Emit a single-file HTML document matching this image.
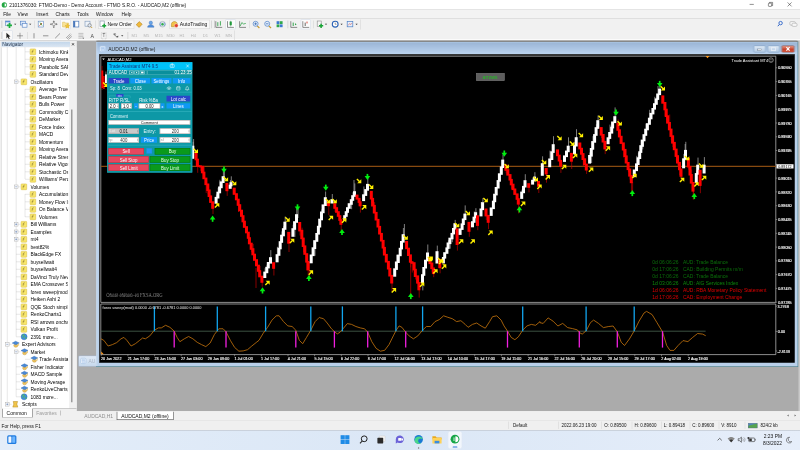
<!DOCTYPE html>
<html><head><meta charset="utf-8"><title>MT4</title>
<style>
html,body{margin:0;padding:0;}
body{width:800px;height:450px;overflow:hidden;position:relative;background:#ababab;font-family:"Liberation Sans", sans-serif;-webkit-text-size-adjust:none;}
#z{position:absolute;left:0;top:0;width:800px;height:450px;zoom:4;transform:scale(0.25);transform-origin:0 0;filter:contrast(1.001);}
div{box-sizing:border-box;}
svg{position:absolute;left:0;top:0;}
svg text{font-family:"Liberation Sans", sans-serif;}
</style></head><body><div id="z">
<div style="position:absolute;left:0.0px;top:0.0px;width:800.0px;height:9.6px;background:#ffffff;"></div>
<div style="position:absolute;left:0.0px;top:9.6px;width:800.0px;height:9.0px;background:#f3f3f3;"></div>
<svg width="800" height="20" viewBox="0 0 800 20"><circle cx="4.3" cy="4.9" r="2.6" fill="#21a641"/><path d="M4.6 3.2 a1.7 1.7 0 0 1 0 3.4 z" fill="#fff"/></svg>
<div style="position:absolute;left:9.3px;top:2.0px;font-size:5.1px;line-height:6.1px;color:#111;white-space:nowrap;transform:scaleX(0.947);transform-origin:0 50%;">2101376030: FTMO-Demo - Demo Account - FTMO S.R.O. - AUDCAD,M2 (offline)</div>
<svg width="800" height="12" viewBox="0 0 800 12" fill="none" stroke="#222" stroke-width="0.5"><path d="M749.6 4.4h4.2"/><rect x="768.4" y="3.2" width="3.2" height="3.2" rx="0.6"/><path d="M769.4 3.2v-0.8h3.2v3.2h-0.9"/><path d="M787.6 2.4l4 4M791.6 2.4l-4 4"/></svg>
<div style="position:absolute;left:3.2px;top:10.9px;font-size:5.1px;line-height:6.1px;color:#111;white-space:nowrap;transform:scaleX(0.95);transform-origin:0 50%;">File</div>
<div style="position:absolute;left:17.6px;top:10.9px;font-size:5.1px;line-height:6.1px;color:#111;white-space:nowrap;transform:scaleX(0.95);transform-origin:0 50%;">View</div>
<div style="position:absolute;left:36.2px;top:10.9px;font-size:5.1px;line-height:6.1px;color:#111;white-space:nowrap;transform:scaleX(0.95);transform-origin:0 50%;">Insert</div>
<div style="position:absolute;left:55.6px;top:10.9px;font-size:5.1px;line-height:6.1px;color:#111;white-space:nowrap;transform:scaleX(0.95);transform-origin:0 50%;">Charts</div>
<div style="position:absolute;left:77.2px;top:10.9px;font-size:5.1px;line-height:6.1px;color:#111;white-space:nowrap;transform:scaleX(0.95);transform-origin:0 50%;">Tools</div>
<div style="position:absolute;left:96.0px;top:10.9px;font-size:5.1px;line-height:6.1px;color:#111;white-space:nowrap;transform:scaleX(0.95);transform-origin:0 50%;">Window</div>
<div style="position:absolute;left:121.6px;top:10.9px;font-size:5.1px;line-height:6.1px;color:#111;white-space:nowrap;transform:scaleX(0.95);transform-origin:0 50%;">Help</div>
<div style="position:absolute;left:0.0px;top:18.5px;width:800.0px;height:22.0px;background:#f1f1f1;border-top:0.5px solid #dcdcdc;"></div>
<div style="position:absolute;left:0.0px;top:38.9px;width:800.0px;height:1.3px;background:#fbfbfb;"></div>
<div style="position:absolute;left:0.0px;top:40.2px;width:77.0px;height:0.8px;background:#d9d9d9;"></div>
<div style="position:absolute;left:360.0px;top:19.5px;width:0.6px;height:10.0px;background:#d0d0d0;"></div>
<div style="position:absolute;left:234.5px;top:30.5px;width:0.6px;height:9.5px;background:#d0d0d0;"></div>
<div style="position:absolute;left:1.6px;top:20.5px;width:0.7px;height:7.5px;background:#c4c4c4;"></div>
<div style="position:absolute;left:1.6px;top:32.0px;width:0.7px;height:7.0px;background:#c4c4c4;"></div>
<div style="position:absolute;left:214.2px;top:20.5px;width:0.7px;height:7.5px;background:#c4c4c4;"></div>
<div style="position:absolute;left:2.6px;top:30.6px;width:9.8px;height:9.2px;background:#f9f9f9;border:0.5px solid #d3dbe8;"></div>
<div style="position:absolute;left:60.5px;top:19.6px;width:10.0px;height:9.6px;background:#fbfbfb;border:0.5px solid #cfd8e6;"></div>
<div style="position:absolute;left:225.5px;top:19.6px;width:10.0px;height:9.6px;background:#fbfbfb;border:0.5px solid #cfd8e6;"></div>
<div style="position:absolute;left:300.8px;top:19.6px;width:10.0px;height:9.6px;background:#fbfbfb;border:0.5px solid #cfd8e6;"></div>
<div style="position:absolute;left:98.3px;top:19.8px;width:36.0px;height:9.2px;background:#f8f8f8;border:0.5px solid #d5d5d5;"></div>
<div style="position:absolute;left:169.6px;top:19.8px;width:40.4px;height:9.2px;background:#f8f8f8;border:0.5px solid #d5d5d5;"></div>
<div style="position:absolute;left:34.5px;top:20.5px;width:0.6px;height:7.8px;background:#cfcfcf;"></div>
<div style="position:absolute;left:95.2px;top:20.5px;width:0.6px;height:7.8px;background:#cfcfcf;"></div>
<div style="position:absolute;left:211.3px;top:20.5px;width:0.6px;height:7.8px;background:#cfcfcf;"></div>
<div style="position:absolute;left:249.2px;top:20.5px;width:0.6px;height:7.8px;background:#cfcfcf;"></div>
<div style="position:absolute;left:287.6px;top:20.5px;width:0.6px;height:7.8px;background:#cfcfcf;"></div>
<div style="position:absolute;left:313.2px;top:20.5px;width:0.6px;height:7.8px;background:#cfcfcf;"></div>
<div style="position:absolute;left:27.5px;top:32.0px;width:0.6px;height:7.0px;background:#cfcfcf;"></div>
<div style="position:absolute;left:127.6px;top:32.0px;width:0.6px;height:7.0px;background:#cfcfcf;"></div>
<svg width="800" height="42" viewBox="0 0 800 42"><rect x="5.4" y="21.0" width="4.6" height="4.6" fill="#eaf1fb" stroke="#5b82b8" stroke-width="0.6"/><rect x="5.4" y="21.0" width="4.6" height="1.3" fill="#5b8fd6"/><path d="M7 25.4h5M9.5 22.9v5" stroke="#1fae3f" stroke-width="1.7"/><path d="M14.1 23.7h2.2l-1.1 1.3z" fill="#333"/><rect x="20.6" y="21.2" width="4.8" height="3.8" fill="#dbe8fa" stroke="#4f7fc3" stroke-width="0.6"/><rect x="22.2" y="23.4" width="4.8" height="3.8" fill="#f4f8ff" stroke="#4f7fc3" stroke-width="0.6"/><path d="M29.1 23.7h2.2l-1.1 1.3z" fill="#333"/><rect x="38.2" y="21.2" width="5.4" height="5.8" fill="#fff" stroke="#5f87bd" stroke-width="0.6"/><path d="M39.6 25.599999999999998l2.4-2.6" stroke="#d23a2a" stroke-width="0.9"/><path d="M40 22.599999999999998l2 2.8" stroke="#27a33a" stroke-width="0.9"/><path d="M53.8 21.0v6.4M50.6 24.2h6.4" stroke="#666" stroke-width="0.6"/><path d="M53.8 20.4l1.1 1.3h-2.2zM53.8 28.0l1.1-1.3h-2.2zM50 24.2l1.3-1.1v2.2zM57.6 24.2l-1.3-1.1v2.2z" fill="#666"/><circle cx="53.8" cy="24.2" r="1.5" fill="#f1f1f1" stroke="#666" stroke-width="0.5"/><path d="M62.6 22.2h2.2l0.6 0.8h3.2v4h-6z" fill="#f9e49a" stroke="#d9b64a" stroke-width="0.5"/><path d="M67.4 23.599999999999998l0.8 1.6 1.7 0.2-1.3 1.2 0.4 1.7-1.6-0.9-1.6 0.9 0.4-1.7-1.3-1.2 1.7-0.2z" fill="#f2c636" stroke="#c9981e" stroke-width="0.3"/><rect x="73.4" y="21.2" width="5.4" height="5.8" fill="#fff" stroke="#4a78ba" stroke-width="0.7"/><rect x="73.4" y="21.2" width="1.8" height="5.8" fill="#4a78ba"/><rect x="85" y="21.2" width="5" height="5" fill="#eef3fa" stroke="#7d97b8" stroke-width="0.6"/><circle cx="89.6" cy="25.4" r="1.7" fill="#dfe9f7" stroke="#6c6c6c" stroke-width="0.6"/><path d="M90.8 26.599999999999998l1.4 1.4" stroke="#c49a2a" stroke-width="0.9"/><rect x="100" y="21.0" width="4.2" height="5.6" fill="#fff" stroke="#7b8aa0" stroke-width="0.6"/><path d="M102.2 25.8h4M104.2 23.8v4" stroke="#17a535" stroke-width="1.4"/><path d="M136.2 24.8l3-3.2 3 2.6-3 3.2z" fill="#f0b93a" stroke="#a9781a" stroke-width="0.5"/><circle cx="150.8" cy="22.8" r="1.7" fill="#6aa5e8" stroke="#3c72b8" stroke-width="0.4"/><path d="M147.6 27.2c0-3.4 6.4-3.4 6.4 0z" fill="#4d8fe0" stroke="#3468ad" stroke-width="0.4"/><circle cx="162.5" cy="24.2" r="2.9" fill="#d7dde6" stroke="#9aa4b3" stroke-width="0.5"/><circle cx="162.5" cy="24.2" r="1.2" fill="#2fae4d"/><path d="M160.7 22.4a2.6 2.6 0 0 0 0 3.6M164.3 22.4a2.6 2.6 0 0 1 0 3.6" stroke="#3f7fd0" stroke-width="0.5" fill="none"/><path d="M171.4 24.4c0-3.8 6-3.8 6 0v2.4h-6z" fill="#f2c24a" stroke="#a47c1d" stroke-width="0.5"/><circle cx="176.3" cy="25.599999999999998" r="1.9" fill="#e03c2c" stroke="#fff" stroke-width="0.4"/><path d="M215.8 21.2v6.2h6.4" stroke="#444" stroke-width="0.6" fill="none"/><path d="M217.8 22.2v4M220.4 21.2v4.4" stroke="#1c9a38" stroke-width="0.8"/><path d="M227.5 21.2v6.2h6.4" stroke="#444" stroke-width="0.6" fill="none"/><rect x="229.6" y="21.599999999999998" width="2.2" height="3.6" fill="#25a843"/><path d="M230.7 20.8v5.6" stroke="#1c7a30" stroke-width="0.5"/><path d="M239.6 21.2v6.2h6.4" stroke="#444" stroke-width="0.6" fill="none"/><path d="M240.2 26.0l1.6-3.4 1.8 1.4 2.2-0.6" stroke="#1c9a38" stroke-width="0.7" fill="none"/><path d="M257.2 25.8l2.2 2.2" stroke="#c9992a" stroke-width="1.2"/><circle cx="255.6" cy="23.8" r="2.5" fill="#e4effc" stroke="#4d7ec4" stroke-width="0.7"/><path d="M254.29999999999998 23.8h2.6M255.6 22.5v2.6" stroke="#2f62ad" stroke-width="0.7"/><path d="M268.8 25.8l2.2 2.2" stroke="#c9992a" stroke-width="1.2"/><circle cx="267.2" cy="23.8" r="2.5" fill="#e4effc" stroke="#4d7ec4" stroke-width="0.7"/><path d="M265.9 23.8h2.6" stroke="#2f62ad" stroke-width="0.7"/><rect x="276.6" y="21.2" width="2.8" height="2.8" fill="#3c78d0"/><rect x="279.8" y="21.2" width="2.8" height="2.8" fill="#2fa84a"/><rect x="276.6" y="24.4" width="2.8" height="2.8" fill="#2fa84a"/><rect x="279.8" y="24.4" width="2.8" height="2.8" fill="#3c78d0"/><path d="M290.8 21.2v6.2h6.4" stroke="#444" stroke-width="0.6" fill="none"/><path d="M293.2 22.599999999999998v3.4" stroke="#1c9a38" stroke-width="0.9"/><path d="M295 23.2l1.6 1-1.6 1z" fill="#1c9a38"/><path d="M302.8 21.2v6.2h6.4" stroke="#444" stroke-width="0.6" fill="none"/><path d="M305.2 22.599999999999998v3.4" stroke="#444" stroke-width="0.8"/><path d="M307 21.599999999999998v1.8" stroke="#d0362a" stroke-width="0.9"/><rect x="317.2" y="21.0" width="4" height="5.4" fill="#f4f4f4" stroke="#8a8a8a" stroke-width="0.6"/><path d="M319 25.8h4.2M321.1 23.7v4.2" stroke="#17a535" stroke-width="1.5"/><path d="M324.9 23.7h2.2l-1.1 1.3z" fill="#333"/><circle cx="335.2" cy="24.2" r="2.9" fill="#fff" stroke="#2b62b5" stroke-width="1.1"/><path d="M335.2 22.599999999999998v1.7h1.3" stroke="#444" stroke-width="0.5" fill="none"/><path d="M340.5 23.7h2.2l-1.1 1.3z" fill="#333"/><rect x="347.2" y="21.4" width="5.6" height="5.4" fill="#e7f0fc" stroke="#4d7ec4" stroke-width="0.7"/><path d="M348.2 25.4l1.4-1.8 1.2 0.9 1.2-1.4" stroke="#d0362a" stroke-width="0.5" fill="none"/><path d="M355.5 23.7h2.2l-1.1 1.3z" fill="#333"/><circle cx="780.6" cy="23.099999999999998" r="1.7" fill="none" stroke="#2d63c8" stroke-width="0.9"/><path d="M779.4 24.4l-1.6 1.8" stroke="#2d63c8" stroke-width="1"/><rect x="789.8" y="21.599999999999998" width="5.6" height="3.6" rx="1.2" fill="#f7f7f7" stroke="#a9a9a9" stroke-width="0.6"/><rect x="792" y="23.2" width="5" height="3.2" rx="1.1" fill="#f7f7f7" stroke="#a9a9a9" stroke-width="0.6"/><path d="M6.4 32.8v5.6l1.4-1.3 1 2.1 0.9-0.4-1-2 1.8-0.2z" fill="#222"/><path d="M20 32.8v6M17 35.8h6" stroke="#555" stroke-width="0.5"/><path d="M34 33.199999999999996v5.2" stroke="#555" stroke-width="0.6"/><path d="M43 35.8h5.4" stroke="#555" stroke-width="0.6"/><path d="M55.2 38.199999999999996l4.8-4.8" stroke="#555" stroke-width="0.6"/><path d="M66 38.0l4.4-4.2M67 39.0l4.4-4.2M68.4 39.599999999999994l3.4-3.2" stroke="#666" stroke-width="0.5"/><path d="M78.4 33.4h5M78.4 35.0h5M78.4 36.599999999999994h5M78.4 38.199999999999996h3.4" stroke="#8a8a8a" stroke-width="0.45"/><path d="M82.2 37.8h2l-1 1.2z" fill="#555"/><rect x="101.4" y="32.8" width="4.8" height="6" fill="none" stroke="#9a9a9a" stroke-width="0.4" stroke-dasharray="0.8 0.6"/><path d="M113.6 34.199999999999996l2 0-0.9-1M113.6 34.199999999999996l3.6 3" stroke="#333" stroke-width="0.6" fill="none"/><path d="M116.4 37.199999999999996h1.8v-1.8z" fill="#333"/><path d="M121.1 35.3h2.2l-1.1 1.3z" fill="#333"/></svg>
<div style="position:absolute;left:107.4px;top:20.9px;font-size:5.1px;line-height:6.1px;color:#111;white-space:nowrap;">New Order</div>
<div style="position:absolute;left:179.8px;top:20.9px;font-size:5.1px;line-height:6.1px;color:#111;white-space:nowrap;">AutoTrading</div>
<div style="position:absolute;left:90.6px;top:32.7px;font-size:5.2px;line-height:6.2px;color:#444;white-space:nowrap;">A</div>
<div style="position:absolute;left:102.6px;top:33.0px;font-size:4.6px;line-height:5.6px;color:#555;white-space:nowrap;">T</div>
<div style="position:absolute;left:131.6px;top:33.2px;font-size:4.1px;line-height:5.1px;color:#b6b6b6;white-space:nowrap;">M1</div>
<div style="position:absolute;left:143.6px;top:33.2px;font-size:4.1px;line-height:5.1px;color:#b6b6b6;white-space:nowrap;">M5</div>
<div style="position:absolute;left:154.8px;top:33.2px;font-size:4.1px;line-height:5.1px;color:#b6b6b6;white-space:nowrap;">M15</div>
<div style="position:absolute;left:166.6px;top:33.2px;font-size:4.1px;line-height:5.1px;color:#b6b6b6;white-space:nowrap;">M30</div>
<div style="position:absolute;left:179.4px;top:33.2px;font-size:4.1px;line-height:5.1px;color:#b6b6b6;white-space:nowrap;">H1</div>
<div style="position:absolute;left:190.8px;top:33.2px;font-size:4.1px;line-height:5.1px;color:#b6b6b6;white-space:nowrap;">H4</div>
<div style="position:absolute;left:202.8px;top:33.2px;font-size:4.1px;line-height:5.1px;color:#b6b6b6;white-space:nowrap;">D1</div>
<div style="position:absolute;left:214.4px;top:33.2px;font-size:4.1px;line-height:5.1px;color:#b6b6b6;white-space:nowrap;">W1</div>
<div style="position:absolute;left:225.6px;top:33.2px;font-size:4.1px;line-height:5.1px;color:#b6b6b6;white-space:nowrap;">MN</div>
<div style="position:absolute;left:0.0px;top:41.0px;width:77.0px;height:379.0px;background:#f0f0f0;"></div>
<div style="position:absolute;left:76.4px;top:41.0px;width:0.6px;height:370.0px;background:#d8d8d8;"></div>
<div style="position:absolute;left:1.3px;top:41.8px;width:68.8px;height:5.2px;background:linear-gradient(#c2d6ea,#dbe6f2);"></div>
<div style="position:absolute;left:2.2px;top:41.3px;font-size:4.9px;line-height:5.9px;color:#1b2f4a;white-space:nowrap;">Navigator</div>
<svg width="80" height="50" viewBox="0 0 80 50"><path d="M72 43.2l2 2.2M74 43.2l-2 2.2" stroke="#222" stroke-width="0.7"/></svg>
<div style="position:absolute;left:1.6px;top:47.4px;width:67.6px;height:361.0px;background:#ffffff;border-left:0.5px solid #d0d0d0;"></div>
<div style="position:absolute;left:69.2px;top:47.4px;width:7.2px;height:361.0px;background:#f1f1f1;"></div>
<div style="position:absolute;left:70.9px;top:109.6px;width:1.5px;height:292.6px;background:#9c9c9c;"></div>
<div style="position:absolute;left:39.0px;top:48.8px;font-size:5.0px;line-height:6.0px;color:#000;white-space:nowrap;max-width:30.0px;overflow:hidden;transform:scaleX(0.97);transform-origin:0 50%;">Ichimoku Kinko Hyo</div>
<div style="position:absolute;left:39.0px;top:56.3px;font-size:5.0px;line-height:6.0px;color:#000;white-space:nowrap;max-width:30.0px;overflow:hidden;transform:scaleX(0.97);transform-origin:0 50%;">Moving Average</div>
<div style="position:absolute;left:39.0px;top:63.8px;font-size:5.0px;line-height:6.0px;color:#000;white-space:nowrap;max-width:30.0px;overflow:hidden;transform:scaleX(0.97);transform-origin:0 50%;">Parabolic SAR</div>
<div style="position:absolute;left:39.0px;top:71.3px;font-size:5.0px;line-height:6.0px;color:#000;white-space:nowrap;max-width:30.0px;overflow:hidden;transform:scaleX(0.97);transform-origin:0 50%;">Standard Deviation</div>
<div style="position:absolute;left:30.6px;top:78.8px;font-size:5.0px;line-height:6.0px;color:#000;white-space:nowrap;max-width:38.4px;overflow:hidden;transform:scaleX(0.97);transform-origin:0 50%;">Oscillators</div>
<div style="position:absolute;left:39.0px;top:86.3px;font-size:5.0px;line-height:6.0px;color:#000;white-space:nowrap;max-width:30.0px;overflow:hidden;transform:scaleX(0.97);transform-origin:0 50%;">Average True Range</div>
<div style="position:absolute;left:39.0px;top:93.8px;font-size:5.0px;line-height:6.0px;color:#000;white-space:nowrap;max-width:30.0px;overflow:hidden;transform:scaleX(0.97);transform-origin:0 50%;">Bears Power</div>
<div style="position:absolute;left:39.0px;top:101.3px;font-size:5.0px;line-height:6.0px;color:#000;white-space:nowrap;max-width:30.0px;overflow:hidden;transform:scaleX(0.97);transform-origin:0 50%;">Bulls Power</div>
<div style="position:absolute;left:39.0px;top:108.8px;font-size:5.0px;line-height:6.0px;color:#000;white-space:nowrap;max-width:30.0px;overflow:hidden;transform:scaleX(0.97);transform-origin:0 50%;">Commodity Channel Index</div>
<div style="position:absolute;left:39.0px;top:116.3px;font-size:5.0px;line-height:6.0px;color:#000;white-space:nowrap;max-width:30.0px;overflow:hidden;transform:scaleX(0.97);transform-origin:0 50%;">DeMarker</div>
<div style="position:absolute;left:39.0px;top:123.8px;font-size:5.0px;line-height:6.0px;color:#000;white-space:nowrap;max-width:30.0px;overflow:hidden;transform:scaleX(0.97);transform-origin:0 50%;">Force Index</div>
<div style="position:absolute;left:39.0px;top:131.3px;font-size:5.0px;line-height:6.0px;color:#000;white-space:nowrap;max-width:30.0px;overflow:hidden;transform:scaleX(0.97);transform-origin:0 50%;">MACD</div>
<div style="position:absolute;left:39.0px;top:138.8px;font-size:5.0px;line-height:6.0px;color:#000;white-space:nowrap;max-width:30.0px;overflow:hidden;transform:scaleX(0.97);transform-origin:0 50%;">Momentum</div>
<div style="position:absolute;left:39.0px;top:146.3px;font-size:5.0px;line-height:6.0px;color:#000;white-space:nowrap;max-width:30.0px;overflow:hidden;transform:scaleX(0.97);transform-origin:0 50%;">Moving Average of Oscillator</div>
<div style="position:absolute;left:39.0px;top:153.8px;font-size:5.0px;line-height:6.0px;color:#000;white-space:nowrap;max-width:30.0px;overflow:hidden;transform:scaleX(0.97);transform-origin:0 50%;">Relative Strength Index</div>
<div style="position:absolute;left:39.0px;top:161.3px;font-size:5.0px;line-height:6.0px;color:#000;white-space:nowrap;max-width:30.0px;overflow:hidden;transform:scaleX(0.97);transform-origin:0 50%;">Relative Vigor Index</div>
<div style="position:absolute;left:39.0px;top:168.8px;font-size:5.0px;line-height:6.0px;color:#000;white-space:nowrap;max-width:30.0px;overflow:hidden;transform:scaleX(0.97);transform-origin:0 50%;">Stochastic Oscillator</div>
<div style="position:absolute;left:39.0px;top:176.3px;font-size:5.0px;line-height:6.0px;color:#000;white-space:nowrap;max-width:30.0px;overflow:hidden;transform:scaleX(0.97);transform-origin:0 50%;">Williams' Percent Range</div>
<div style="position:absolute;left:30.6px;top:183.8px;font-size:5.0px;line-height:6.0px;color:#000;white-space:nowrap;max-width:38.4px;overflow:hidden;transform:scaleX(0.97);transform-origin:0 50%;">Volumes</div>
<div style="position:absolute;left:39.0px;top:191.3px;font-size:5.0px;line-height:6.0px;color:#000;white-space:nowrap;max-width:30.0px;overflow:hidden;transform:scaleX(0.97);transform-origin:0 50%;">Accumulation/Distribution</div>
<div style="position:absolute;left:39.0px;top:198.8px;font-size:5.0px;line-height:6.0px;color:#000;white-space:nowrap;max-width:30.0px;overflow:hidden;transform:scaleX(0.97);transform-origin:0 50%;">Money Flow Index</div>
<div style="position:absolute;left:39.0px;top:206.3px;font-size:5.0px;line-height:6.0px;color:#000;white-space:nowrap;max-width:30.0px;overflow:hidden;transform:scaleX(0.97);transform-origin:0 50%;">On Balance Volume</div>
<div style="position:absolute;left:39.0px;top:213.8px;font-size:5.0px;line-height:6.0px;color:#000;white-space:nowrap;max-width:30.0px;overflow:hidden;transform:scaleX(0.97);transform-origin:0 50%;">Volumes</div>
<div style="position:absolute;left:30.6px;top:221.3px;font-size:5.0px;line-height:6.0px;color:#000;white-space:nowrap;max-width:38.4px;overflow:hidden;transform:scaleX(0.97);transform-origin:0 50%;">Bill Williams</div>
<div style="position:absolute;left:30.6px;top:228.8px;font-size:5.0px;line-height:6.0px;color:#000;white-space:nowrap;max-width:38.4px;overflow:hidden;transform:scaleX(0.97);transform-origin:0 50%;">Examples</div>
<div style="position:absolute;left:30.6px;top:236.3px;font-size:5.0px;line-height:6.0px;color:#000;white-space:nowrap;max-width:38.4px;overflow:hidden;transform:scaleX(0.97);transform-origin:0 50%;">mt4</div>
<div style="position:absolute;left:30.6px;top:243.8px;font-size:5.0px;line-height:6.0px;color:#000;white-space:nowrap;max-width:38.4px;overflow:hidden;transform:scaleX(0.97);transform-origin:0 50%;">best82%</div>
<div style="position:absolute;left:30.6px;top:251.3px;font-size:5.0px;line-height:6.0px;color:#000;white-space:nowrap;max-width:38.4px;overflow:hidden;transform:scaleX(0.97);transform-origin:0 50%;">BlackEdge FX</div>
<div style="position:absolute;left:30.6px;top:258.8px;font-size:5.0px;line-height:6.0px;color:#000;white-space:nowrap;max-width:38.4px;overflow:hidden;transform:scaleX(0.97);transform-origin:0 50%;">buysellwait</div>
<div style="position:absolute;left:30.6px;top:266.3px;font-size:5.0px;line-height:6.0px;color:#000;white-space:nowrap;max-width:38.4px;overflow:hidden;transform:scaleX(0.97);transform-origin:0 50%;">buysellwait4</div>
<div style="position:absolute;left:30.6px;top:273.8px;font-size:5.0px;line-height:6.0px;color:#000;white-space:nowrap;max-width:38.4px;overflow:hidden;transform:scaleX(0.97);transform-origin:0 50%;">DaVinci Truly New</div>
<div style="position:absolute;left:30.6px;top:281.3px;font-size:5.0px;line-height:6.0px;color:#000;white-space:nowrap;max-width:38.4px;overflow:hidden;transform:scaleX(0.97);transform-origin:0 50%;">EMA Crossover Signal</div>
<div style="position:absolute;left:30.6px;top:288.8px;font-size:5.0px;line-height:6.0px;color:#000;white-space:nowrap;max-width:38.4px;overflow:hidden;transform:scaleX(0.97);transform-origin:0 50%;">forex sweep(mod)</div>
<div style="position:absolute;left:30.6px;top:296.3px;font-size:5.0px;line-height:6.0px;color:#000;white-space:nowrap;max-width:38.4px;overflow:hidden;transform:scaleX(0.97);transform-origin:0 50%;">Heiken Ashi 2</div>
<div style="position:absolute;left:30.6px;top:303.8px;font-size:5.0px;line-height:6.0px;color:#000;white-space:nowrap;max-width:38.4px;overflow:hidden;transform:scaleX(0.97);transform-origin:0 50%;">QQE Stoch simple</div>
<div style="position:absolute;left:30.6px;top:311.3px;font-size:5.0px;line-height:6.0px;color:#000;white-space:nowrap;max-width:38.4px;overflow:hidden;transform:scaleX(0.97);transform-origin:0 50%;">RenkoCharts1</div>
<div style="position:absolute;left:30.6px;top:318.8px;font-size:5.0px;line-height:6.0px;color:#000;white-space:nowrap;max-width:38.4px;overflow:hidden;transform:scaleX(0.97);transform-origin:0 50%;">RSI arrows onchart</div>
<div style="position:absolute;left:30.6px;top:326.3px;font-size:5.0px;line-height:6.0px;color:#000;white-space:nowrap;max-width:38.4px;overflow:hidden;transform:scaleX(0.97);transform-origin:0 50%;">Vulkan Profit</div>
<div style="position:absolute;left:30.6px;top:333.8px;font-size:5.0px;line-height:6.0px;color:#000;white-space:nowrap;max-width:38.4px;overflow:hidden;transform:scaleX(0.97);transform-origin:0 50%;">2391 more...</div>
<div style="position:absolute;left:22.0px;top:341.3px;font-size:5.0px;line-height:6.0px;color:#000;white-space:nowrap;max-width:47.0px;overflow:hidden;transform:scaleX(0.97);transform-origin:0 50%;">Expert Advisors</div>
<div style="position:absolute;left:30.6px;top:348.8px;font-size:5.0px;line-height:6.0px;color:#000;white-space:nowrap;max-width:38.4px;overflow:hidden;transform:scaleX(0.97);transform-origin:0 50%;">Market</div>
<div style="position:absolute;left:39.2px;top:356.3px;font-size:5.0px;line-height:6.0px;color:#000;white-space:nowrap;max-width:29.8px;overflow:hidden;transform:scaleX(0.97);transform-origin:0 50%;">Trade Assistant MT4</div>
<div style="position:absolute;left:30.6px;top:363.8px;font-size:5.0px;line-height:6.0px;color:#000;white-space:nowrap;max-width:38.4px;overflow:hidden;transform:scaleX(0.97);transform-origin:0 50%;">Fisher Indicator</div>
<div style="position:absolute;left:30.6px;top:371.3px;font-size:5.0px;line-height:6.0px;color:#000;white-space:nowrap;max-width:38.4px;overflow:hidden;transform:scaleX(0.97);transform-origin:0 50%;">MACD Sample</div>
<div style="position:absolute;left:30.6px;top:378.8px;font-size:5.0px;line-height:6.0px;color:#000;white-space:nowrap;max-width:38.4px;overflow:hidden;transform:scaleX(0.97);transform-origin:0 50%;">Moving Average</div>
<div style="position:absolute;left:30.6px;top:386.3px;font-size:5.0px;line-height:6.0px;color:#000;white-space:nowrap;max-width:38.4px;overflow:hidden;transform:scaleX(0.97);transform-origin:0 50%;">RenkoLiveCharts_v600</div>
<div style="position:absolute;left:30.6px;top:393.8px;font-size:5.0px;line-height:6.0px;color:#000;white-space:nowrap;max-width:38.4px;overflow:hidden;transform:scaleX(0.97);transform-origin:0 50%;">1083 more...</div>
<div style="position:absolute;left:22.0px;top:401.3px;font-size:5.0px;line-height:6.0px;color:#000;white-space:nowrap;max-width:47.0px;overflow:hidden;transform:scaleX(0.97);transform-origin:0 50%;">Scripts</div>
<svg width="80" height="420" viewBox="0 0 80 420"><path d="M7.3 47.6V404.3" stroke="#ababab" stroke-width="0.55" stroke-dasharray="0.5 0.5"/><path d="M16.2 47.6V336.8M16.2 351.8V396.8" stroke="#ababab" stroke-width="0.55" stroke-dasharray="0.5 0.5"/><path d="M25 47.6V74.3M25 89.3V179.3M25 194.3V216.8" stroke="#ababab" stroke-width="0.55" stroke-dasharray="0.5 0.5"/><path d="M25.0 51.8H29.4" stroke="#ababab" stroke-width="0.55" stroke-dasharray="0.5 0.5"/><rect x="30.1" y="48.9" width="5.6" height="5.8" rx="0.6" fill="#f8e66a" stroke="#d6bb3e" stroke-width="0.5"/><path d="M33.7 50.2c-1.1-0.3-1.2 0.5-1.3 1.2l-0.4 2M31.8 51.5h1.6" stroke="#7b6a2a" stroke-width="0.45" fill="none"/><path d="M25.0 59.3H29.4" stroke="#ababab" stroke-width="0.55" stroke-dasharray="0.5 0.5"/><rect x="30.1" y="56.4" width="5.6" height="5.8" rx="0.6" fill="#f8e66a" stroke="#d6bb3e" stroke-width="0.5"/><path d="M33.7 57.7c-1.1-0.3-1.2 0.5-1.3 1.2l-0.4 2M31.8 59.0h1.6" stroke="#7b6a2a" stroke-width="0.45" fill="none"/><path d="M25.0 66.8H29.4" stroke="#ababab" stroke-width="0.55" stroke-dasharray="0.5 0.5"/><rect x="30.1" y="63.9" width="5.6" height="5.8" rx="0.6" fill="#f8e66a" stroke="#d6bb3e" stroke-width="0.5"/><path d="M33.7 65.2c-1.1-0.3-1.2 0.5-1.3 1.2l-0.4 2M31.8 66.5h1.6" stroke="#7b6a2a" stroke-width="0.45" fill="none"/><path d="M25.0 74.3H29.4" stroke="#ababab" stroke-width="0.55" stroke-dasharray="0.5 0.5"/><rect x="30.1" y="71.4" width="5.6" height="5.8" rx="0.6" fill="#f8e66a" stroke="#d6bb3e" stroke-width="0.5"/><path d="M33.7 72.7c-1.1-0.3-1.2 0.5-1.3 1.2l-0.4 2M31.8 74.0h1.6" stroke="#7b6a2a" stroke-width="0.45" fill="none"/><path d="M16.2 81.8H20.4" stroke="#ababab" stroke-width="0.55" stroke-dasharray="0.5 0.5"/><rect x="21.1" y="78.9" width="5.6" height="5.8" rx="0.6" fill="#f8e66a" stroke="#d6bb3e" stroke-width="0.5"/><path d="M24.7 80.2c-1.1-0.3-1.2 0.5-1.3 1.2l-0.4 2M22.8 81.5h1.6" stroke="#7b6a2a" stroke-width="0.45" fill="none"/><rect x="14.399999999999999" y="80.0" width="3.6" height="3.6" fill="#fff" stroke="#a9a9a9" stroke-width="0.45"/><path d="M15.2 81.8h2" stroke="#3a5f9a" stroke-width="0.45"/><path d="M25.0 89.3H29.4" stroke="#ababab" stroke-width="0.55" stroke-dasharray="0.5 0.5"/><rect x="30.1" y="86.4" width="5.6" height="5.8" rx="0.6" fill="#f8e66a" stroke="#d6bb3e" stroke-width="0.5"/><path d="M33.7 87.7c-1.1-0.3-1.2 0.5-1.3 1.2l-0.4 2M31.8 89.0h1.6" stroke="#7b6a2a" stroke-width="0.45" fill="none"/><path d="M25.0 96.8H29.4" stroke="#ababab" stroke-width="0.55" stroke-dasharray="0.5 0.5"/><rect x="30.1" y="93.9" width="5.6" height="5.8" rx="0.6" fill="#f8e66a" stroke="#d6bb3e" stroke-width="0.5"/><path d="M33.7 95.2c-1.1-0.3-1.2 0.5-1.3 1.2l-0.4 2M31.8 96.5h1.6" stroke="#7b6a2a" stroke-width="0.45" fill="none"/><path d="M25.0 104.3H29.4" stroke="#ababab" stroke-width="0.55" stroke-dasharray="0.5 0.5"/><rect x="30.1" y="101.4" width="5.6" height="5.8" rx="0.6" fill="#f8e66a" stroke="#d6bb3e" stroke-width="0.5"/><path d="M33.7 102.7c-1.1-0.3-1.2 0.5-1.3 1.2l-0.4 2M31.8 104.0h1.6" stroke="#7b6a2a" stroke-width="0.45" fill="none"/><path d="M25.0 111.8H29.4" stroke="#ababab" stroke-width="0.55" stroke-dasharray="0.5 0.5"/><rect x="30.1" y="108.9" width="5.6" height="5.8" rx="0.6" fill="#f8e66a" stroke="#d6bb3e" stroke-width="0.5"/><path d="M33.7 110.2c-1.1-0.3-1.2 0.5-1.3 1.2l-0.4 2M31.8 111.5h1.6" stroke="#7b6a2a" stroke-width="0.45" fill="none"/><path d="M25.0 119.3H29.4" stroke="#ababab" stroke-width="0.55" stroke-dasharray="0.5 0.5"/><rect x="30.1" y="116.4" width="5.6" height="5.8" rx="0.6" fill="#f8e66a" stroke="#d6bb3e" stroke-width="0.5"/><path d="M33.7 117.7c-1.1-0.3-1.2 0.5-1.3 1.2l-0.4 2M31.8 119.0h1.6" stroke="#7b6a2a" stroke-width="0.45" fill="none"/><path d="M25.0 126.8H29.4" stroke="#ababab" stroke-width="0.55" stroke-dasharray="0.5 0.5"/><rect x="30.1" y="123.9" width="5.6" height="5.8" rx="0.6" fill="#f8e66a" stroke="#d6bb3e" stroke-width="0.5"/><path d="M33.7 125.2c-1.1-0.3-1.2 0.5-1.3 1.2l-0.4 2M31.8 126.5h1.6" stroke="#7b6a2a" stroke-width="0.45" fill="none"/><path d="M25.0 134.3H29.4" stroke="#ababab" stroke-width="0.55" stroke-dasharray="0.5 0.5"/><rect x="30.1" y="131.4" width="5.6" height="5.8" rx="0.6" fill="#f8e66a" stroke="#d6bb3e" stroke-width="0.5"/><path d="M33.7 132.7c-1.1-0.3-1.2 0.5-1.3 1.2l-0.4 2M31.8 134.0h1.6" stroke="#7b6a2a" stroke-width="0.45" fill="none"/><path d="M25.0 141.8H29.4" stroke="#ababab" stroke-width="0.55" stroke-dasharray="0.5 0.5"/><rect x="30.1" y="138.9" width="5.6" height="5.8" rx="0.6" fill="#f8e66a" stroke="#d6bb3e" stroke-width="0.5"/><path d="M33.7 140.2c-1.1-0.3-1.2 0.5-1.3 1.2l-0.4 2M31.8 141.5h1.6" stroke="#7b6a2a" stroke-width="0.45" fill="none"/><path d="M25.0 149.3H29.4" stroke="#ababab" stroke-width="0.55" stroke-dasharray="0.5 0.5"/><rect x="30.1" y="146.4" width="5.6" height="5.8" rx="0.6" fill="#f8e66a" stroke="#d6bb3e" stroke-width="0.5"/><path d="M33.7 147.7c-1.1-0.3-1.2 0.5-1.3 1.2l-0.4 2M31.8 149.0h1.6" stroke="#7b6a2a" stroke-width="0.45" fill="none"/><path d="M25.0 156.8H29.4" stroke="#ababab" stroke-width="0.55" stroke-dasharray="0.5 0.5"/><rect x="30.1" y="153.9" width="5.6" height="5.8" rx="0.6" fill="#f8e66a" stroke="#d6bb3e" stroke-width="0.5"/><path d="M33.7 155.2c-1.1-0.3-1.2 0.5-1.3 1.2l-0.4 2M31.8 156.5h1.6" stroke="#7b6a2a" stroke-width="0.45" fill="none"/><path d="M25.0 164.3H29.4" stroke="#ababab" stroke-width="0.55" stroke-dasharray="0.5 0.5"/><rect x="30.1" y="161.4" width="5.6" height="5.8" rx="0.6" fill="#f8e66a" stroke="#d6bb3e" stroke-width="0.5"/><path d="M33.7 162.7c-1.1-0.3-1.2 0.5-1.3 1.2l-0.4 2M31.8 164.0h1.6" stroke="#7b6a2a" stroke-width="0.45" fill="none"/><path d="M25.0 171.8H29.4" stroke="#ababab" stroke-width="0.55" stroke-dasharray="0.5 0.5"/><rect x="30.1" y="168.9" width="5.6" height="5.8" rx="0.6" fill="#f8e66a" stroke="#d6bb3e" stroke-width="0.5"/><path d="M33.7 170.2c-1.1-0.3-1.2 0.5-1.3 1.2l-0.4 2M31.8 171.5h1.6" stroke="#7b6a2a" stroke-width="0.45" fill="none"/><path d="M25.0 179.3H29.4" stroke="#ababab" stroke-width="0.55" stroke-dasharray="0.5 0.5"/><rect x="30.1" y="176.4" width="5.6" height="5.8" rx="0.6" fill="#f8e66a" stroke="#d6bb3e" stroke-width="0.5"/><path d="M33.7 177.7c-1.1-0.3-1.2 0.5-1.3 1.2l-0.4 2M31.8 179.0h1.6" stroke="#7b6a2a" stroke-width="0.45" fill="none"/><path d="M16.2 186.8H20.4" stroke="#ababab" stroke-width="0.55" stroke-dasharray="0.5 0.5"/><rect x="21.1" y="183.9" width="5.6" height="5.8" rx="0.6" fill="#f8e66a" stroke="#d6bb3e" stroke-width="0.5"/><path d="M24.7 185.2c-1.1-0.3-1.2 0.5-1.3 1.2l-0.4 2M22.8 186.5h1.6" stroke="#7b6a2a" stroke-width="0.45" fill="none"/><rect x="14.399999999999999" y="185.0" width="3.6" height="3.6" fill="#fff" stroke="#a9a9a9" stroke-width="0.45"/><path d="M15.2 186.8h2" stroke="#3a5f9a" stroke-width="0.45"/><path d="M25.0 194.3H29.4" stroke="#ababab" stroke-width="0.55" stroke-dasharray="0.5 0.5"/><rect x="30.1" y="191.4" width="5.6" height="5.8" rx="0.6" fill="#f8e66a" stroke="#d6bb3e" stroke-width="0.5"/><path d="M33.7 192.7c-1.1-0.3-1.2 0.5-1.3 1.2l-0.4 2M31.8 194.0h1.6" stroke="#7b6a2a" stroke-width="0.45" fill="none"/><path d="M25.0 201.8H29.4" stroke="#ababab" stroke-width="0.55" stroke-dasharray="0.5 0.5"/><rect x="30.1" y="198.9" width="5.6" height="5.8" rx="0.6" fill="#f8e66a" stroke="#d6bb3e" stroke-width="0.5"/><path d="M33.7 200.2c-1.1-0.3-1.2 0.5-1.3 1.2l-0.4 2M31.8 201.5h1.6" stroke="#7b6a2a" stroke-width="0.45" fill="none"/><path d="M25.0 209.3H29.4" stroke="#ababab" stroke-width="0.55" stroke-dasharray="0.5 0.5"/><rect x="30.1" y="206.4" width="5.6" height="5.8" rx="0.6" fill="#f8e66a" stroke="#d6bb3e" stroke-width="0.5"/><path d="M33.7 207.7c-1.1-0.3-1.2 0.5-1.3 1.2l-0.4 2M31.8 209.0h1.6" stroke="#7b6a2a" stroke-width="0.45" fill="none"/><path d="M25.0 216.8H29.4" stroke="#ababab" stroke-width="0.55" stroke-dasharray="0.5 0.5"/><rect x="30.1" y="213.9" width="5.6" height="5.8" rx="0.6" fill="#f8e66a" stroke="#d6bb3e" stroke-width="0.5"/><path d="M33.7 215.2c-1.1-0.3-1.2 0.5-1.3 1.2l-0.4 2M31.8 216.5h1.6" stroke="#7b6a2a" stroke-width="0.45" fill="none"/><path d="M16.2 224.3H20.4" stroke="#ababab" stroke-width="0.55" stroke-dasharray="0.5 0.5"/><rect x="21.1" y="221.4" width="5.6" height="5.8" rx="0.6" fill="#f8e66a" stroke="#d6bb3e" stroke-width="0.5"/><path d="M24.7 222.7c-1.1-0.3-1.2 0.5-1.3 1.2l-0.4 2M22.8 224.0h1.6" stroke="#7b6a2a" stroke-width="0.45" fill="none"/><rect x="14.399999999999999" y="222.5" width="3.6" height="3.6" fill="#fff" stroke="#a9a9a9" stroke-width="0.45"/><path d="M15.2 224.3h2M16.2 223.3v2" stroke="#3a5f9a" stroke-width="0.45"/><path d="M16.2 231.8H20.4" stroke="#ababab" stroke-width="0.55" stroke-dasharray="0.5 0.5"/><rect x="21.1" y="228.9" width="5.6" height="5.8" rx="0.6" fill="#f8e66a" stroke="#d6bb3e" stroke-width="0.5"/><path d="M24.7 230.2c-1.1-0.3-1.2 0.5-1.3 1.2l-0.4 2M22.8 231.5h1.6" stroke="#7b6a2a" stroke-width="0.45" fill="none"/><rect x="14.399999999999999" y="230.0" width="3.6" height="3.6" fill="#fff" stroke="#a9a9a9" stroke-width="0.45"/><path d="M15.2 231.8h2M16.2 230.8v2" stroke="#3a5f9a" stroke-width="0.45"/><path d="M16.2 239.3H20.4" stroke="#ababab" stroke-width="0.55" stroke-dasharray="0.5 0.5"/><rect x="21.1" y="236.4" width="5.6" height="5.8" rx="0.6" fill="#f8e66a" stroke="#d6bb3e" stroke-width="0.5"/><path d="M24.7 237.7c-1.1-0.3-1.2 0.5-1.3 1.2l-0.4 2M22.8 239.0h1.6" stroke="#7b6a2a" stroke-width="0.45" fill="none"/><rect x="14.399999999999999" y="237.5" width="3.6" height="3.6" fill="#fff" stroke="#a9a9a9" stroke-width="0.45"/><path d="M15.2 239.3h2M16.2 238.3v2" stroke="#3a5f9a" stroke-width="0.45"/><path d="M16.2 246.8H20.4" stroke="#ababab" stroke-width="0.55" stroke-dasharray="0.5 0.5"/><rect x="21.1" y="243.9" width="5.6" height="5.8" rx="0.6" fill="#f8e66a" stroke="#d6bb3e" stroke-width="0.5"/><path d="M24.7 245.2c-1.1-0.3-1.2 0.5-1.3 1.2l-0.4 2M22.8 246.5h1.6" stroke="#7b6a2a" stroke-width="0.45" fill="none"/><path d="M16.2 254.3H20.4" stroke="#ababab" stroke-width="0.55" stroke-dasharray="0.5 0.5"/><rect x="21.1" y="251.4" width="5.6" height="5.8" rx="0.6" fill="#f8e66a" stroke="#d6bb3e" stroke-width="0.5"/><path d="M24.7 252.7c-1.1-0.3-1.2 0.5-1.3 1.2l-0.4 2M22.8 254.0h1.6" stroke="#7b6a2a" stroke-width="0.45" fill="none"/><path d="M16.2 261.8H20.4" stroke="#ababab" stroke-width="0.55" stroke-dasharray="0.5 0.5"/><rect x="21.1" y="258.9" width="5.6" height="5.8" rx="0.6" fill="#f8e66a" stroke="#d6bb3e" stroke-width="0.5"/><path d="M24.7 260.2c-1.1-0.3-1.2 0.5-1.3 1.2l-0.4 2M22.8 261.5h1.6" stroke="#7b6a2a" stroke-width="0.45" fill="none"/><path d="M16.2 269.3H20.4" stroke="#ababab" stroke-width="0.55" stroke-dasharray="0.5 0.5"/><rect x="21.1" y="266.4" width="5.6" height="5.8" rx="0.6" fill="#f8e66a" stroke="#d6bb3e" stroke-width="0.5"/><path d="M24.7 267.7c-1.1-0.3-1.2 0.5-1.3 1.2l-0.4 2M22.8 269.0h1.6" stroke="#7b6a2a" stroke-width="0.45" fill="none"/><path d="M16.2 276.8H20.4" stroke="#ababab" stroke-width="0.55" stroke-dasharray="0.5 0.5"/><rect x="21.1" y="273.9" width="5.6" height="5.8" rx="0.6" fill="#f8e66a" stroke="#d6bb3e" stroke-width="0.5"/><path d="M24.7 275.2c-1.1-0.3-1.2 0.5-1.3 1.2l-0.4 2M22.8 276.5h1.6" stroke="#7b6a2a" stroke-width="0.45" fill="none"/><path d="M16.2 284.3H20.4" stroke="#ababab" stroke-width="0.55" stroke-dasharray="0.5 0.5"/><rect x="21.1" y="281.4" width="5.6" height="5.8" rx="0.6" fill="#f8e66a" stroke="#d6bb3e" stroke-width="0.5"/><path d="M24.7 282.7c-1.1-0.3-1.2 0.5-1.3 1.2l-0.4 2M22.8 284.0h1.6" stroke="#7b6a2a" stroke-width="0.45" fill="none"/><path d="M16.2 291.8H20.4" stroke="#ababab" stroke-width="0.55" stroke-dasharray="0.5 0.5"/><rect x="21.1" y="288.9" width="5.6" height="5.8" rx="0.6" fill="#f8e66a" stroke="#d6bb3e" stroke-width="0.5"/><path d="M24.7 290.2c-1.1-0.3-1.2 0.5-1.3 1.2l-0.4 2M22.8 291.5h1.6" stroke="#7b6a2a" stroke-width="0.45" fill="none"/><path d="M16.2 299.3H20.4" stroke="#ababab" stroke-width="0.55" stroke-dasharray="0.5 0.5"/><rect x="21.1" y="296.4" width="5.6" height="5.8" rx="0.6" fill="#f8e66a" stroke="#d6bb3e" stroke-width="0.5"/><path d="M24.7 297.7c-1.1-0.3-1.2 0.5-1.3 1.2l-0.4 2M22.8 299.0h1.6" stroke="#7b6a2a" stroke-width="0.45" fill="none"/><path d="M16.2 306.8H20.4" stroke="#ababab" stroke-width="0.55" stroke-dasharray="0.5 0.5"/><rect x="21.1" y="303.9" width="5.6" height="5.8" rx="0.6" fill="#f8e66a" stroke="#d6bb3e" stroke-width="0.5"/><path d="M24.7 305.2c-1.1-0.3-1.2 0.5-1.3 1.2l-0.4 2M22.8 306.5h1.6" stroke="#7b6a2a" stroke-width="0.45" fill="none"/><path d="M16.2 314.3H20.4" stroke="#ababab" stroke-width="0.55" stroke-dasharray="0.5 0.5"/><rect x="21.1" y="311.4" width="5.6" height="5.8" rx="0.6" fill="#f8e66a" stroke="#d6bb3e" stroke-width="0.5"/><path d="M24.7 312.7c-1.1-0.3-1.2 0.5-1.3 1.2l-0.4 2M22.8 314.0h1.6" stroke="#7b6a2a" stroke-width="0.45" fill="none"/><path d="M16.2 321.8H20.4" stroke="#ababab" stroke-width="0.55" stroke-dasharray="0.5 0.5"/><rect x="21.1" y="318.9" width="5.6" height="5.8" rx="0.6" fill="#f8e66a" stroke="#d6bb3e" stroke-width="0.5"/><path d="M24.7 320.2c-1.1-0.3-1.2 0.5-1.3 1.2l-0.4 2M22.8 321.5h1.6" stroke="#7b6a2a" stroke-width="0.45" fill="none"/><path d="M16.2 329.3H20.4" stroke="#ababab" stroke-width="0.55" stroke-dasharray="0.5 0.5"/><rect x="21.1" y="326.4" width="5.6" height="5.8" rx="0.6" fill="#f8e66a" stroke="#d6bb3e" stroke-width="0.5"/><path d="M24.7 327.7c-1.1-0.3-1.2 0.5-1.3 1.2l-0.4 2M22.8 329.0h1.6" stroke="#7b6a2a" stroke-width="0.45" fill="none"/><path d="M16.2 336.8H20.4" stroke="#ababab" stroke-width="0.55" stroke-dasharray="0.5 0.5"/><circle cx="24.1" cy="336.8" r="3" fill="#3f8de0" stroke="#2a62a8" stroke-width="0.4"/><path d="M22.2 335.6c1-1.4 2.4-0.8 2.2 0.4s-1.8 0.6-1.6 2M25.2 337.2c1-0.2 1.2 1 0.2 1.8" stroke="#58c24a" stroke-width="1" fill="none"/><path d="M7.3 344.3H11.6" stroke="#ababab" stroke-width="0.55" stroke-dasharray="0.5 0.5"/><ellipse cx="15.799999999999999" cy="345.6" rx="2" ry="1.7" fill="#f0c25a" stroke="#b8902d" stroke-width="0.4"/><path d="M12.2 343.1l3.4-1.8 3.6 1.6-3.4 1.9z" fill="#4a8ad8" stroke="#2c62ad" stroke-width="0.4"/><path d="M18.6 343.4v2.2" stroke="#d9a82a" stroke-width="0.6"/><rect x="5.5" y="342.5" width="3.6" height="3.6" fill="#fff" stroke="#a9a9a9" stroke-width="0.45"/><path d="M6.3 344.3h2" stroke="#3a5f9a" stroke-width="0.45"/><path d="M16.2 351.8H20.4" stroke="#ababab" stroke-width="0.55" stroke-dasharray="0.5 0.5"/><ellipse cx="24.6" cy="353.1" rx="2" ry="1.7" fill="#f0c25a" stroke="#b8902d" stroke-width="0.4"/><path d="M21.0 350.6l3.4-1.8 3.6 1.6-3.4 1.9z" fill="#4a8ad8" stroke="#2c62ad" stroke-width="0.4"/><path d="M27.4 350.9v2.2" stroke="#d9a82a" stroke-width="0.6"/><rect x="14.399999999999999" y="350.0" width="3.6" height="3.6" fill="#fff" stroke="#a9a9a9" stroke-width="0.45"/><path d="M15.2 351.8h2" stroke="#3a5f9a" stroke-width="0.45"/><path d="M25.0 359.3H30.2" stroke="#ababab" stroke-width="0.55" stroke-dasharray="0.5 0.5"/><ellipse cx="34.4" cy="360.6" rx="2" ry="1.7" fill="#f0c25a" stroke="#b8902d" stroke-width="0.4"/><path d="M30.8 358.1l3.4-1.8 3.6 1.6-3.4 1.9z" fill="#4a8ad8" stroke="#2c62ad" stroke-width="0.4"/><path d="M37.2 358.4v2.2" stroke="#d9a82a" stroke-width="0.6"/><path d="M16.2 366.8H20.4" stroke="#ababab" stroke-width="0.55" stroke-dasharray="0.5 0.5"/><ellipse cx="24.6" cy="368.1" rx="2" ry="1.7" fill="#f0c25a" stroke="#b8902d" stroke-width="0.4"/><path d="M21.0 365.6l3.4-1.8 3.6 1.6-3.4 1.9z" fill="#4a8ad8" stroke="#2c62ad" stroke-width="0.4"/><path d="M27.4 365.9v2.2" stroke="#d9a82a" stroke-width="0.6"/><path d="M16.2 374.3H20.4" stroke="#ababab" stroke-width="0.55" stroke-dasharray="0.5 0.5"/><ellipse cx="24.6" cy="375.6" rx="2" ry="1.7" fill="#f0c25a" stroke="#b8902d" stroke-width="0.4"/><path d="M21.0 373.1l3.4-1.8 3.6 1.6-3.4 1.9z" fill="#4a8ad8" stroke="#2c62ad" stroke-width="0.4"/><path d="M27.4 373.4v2.2" stroke="#d9a82a" stroke-width="0.6"/><path d="M16.2 381.8H20.4" stroke="#ababab" stroke-width="0.55" stroke-dasharray="0.5 0.5"/><ellipse cx="24.6" cy="383.1" rx="2" ry="1.7" fill="#f0c25a" stroke="#b8902d" stroke-width="0.4"/><path d="M21.0 380.6l3.4-1.8 3.6 1.6-3.4 1.9z" fill="#4a8ad8" stroke="#2c62ad" stroke-width="0.4"/><path d="M27.4 380.9v2.2" stroke="#d9a82a" stroke-width="0.6"/><path d="M16.2 389.3H20.4" stroke="#ababab" stroke-width="0.55" stroke-dasharray="0.5 0.5"/><ellipse cx="24.6" cy="390.6" rx="2" ry="1.7" fill="#f0c25a" stroke="#b8902d" stroke-width="0.4"/><path d="M21.0 388.1l3.4-1.8 3.6 1.6-3.4 1.9z" fill="#4a8ad8" stroke="#2c62ad" stroke-width="0.4"/><path d="M27.4 388.4v2.2" stroke="#d9a82a" stroke-width="0.6"/><path d="M16.2 396.8H20.4" stroke="#ababab" stroke-width="0.55" stroke-dasharray="0.5 0.5"/><circle cx="24.1" cy="396.8" r="3" fill="#3f8de0" stroke="#2a62a8" stroke-width="0.4"/><path d="M22.2 395.6c1-1.4 2.4-0.8 2.2 0.4s-1.8 0.6-1.6 2M25.2 397.2c1-0.2 1.2 1 0.2 1.8" stroke="#58c24a" stroke-width="1" fill="none"/><path d="M7.3 404.3H11.6" stroke="#ababab" stroke-width="0.55" stroke-dasharray="0.5 0.5"/><path d="M13.2 401.5h4.4l-0.8 2.6 1 3h-5l1-3z" fill="#f0c44a" stroke="#b58b1e" stroke-width="0.5"/><rect x="5.5" y="402.5" width="3.6" height="3.6" fill="#fff" stroke="#a9a9a9" stroke-width="0.45"/><path d="M6.3 404.3h2M7.3 403.3v2" stroke="#3a5f9a" stroke-width="0.45"/></svg>
<div style="position:absolute;left:32.4px;top:408.4px;width:44.0px;height:0.6px;background:#a0a0a0;"></div>
<div style="position:absolute;left:2.2px;top:408.6px;width:30.2px;height:8.8px;background:#ffffff;border:0.6px solid #555;border-top:none;"></div>
<div style="position:absolute;left:6.6px;top:409.8px;font-size:5.0px;line-height:6.0px;color:#111;white-space:nowrap;">Common</div>
<div style="position:absolute;left:36.2px;top:409.8px;font-size:5.0px;line-height:6.0px;color:#9a9a9a;white-space:nowrap;">Favorites</div>
<div style="position:absolute;left:60.2px;top:410.4px;width:0.5px;height:5.0px;background:#9a9a9a;"></div>
<div style="position:absolute;left:78.2px;top:355.5px;width:20.0px;height:11.3px;background:linear-gradient(#e0eaf6,#c6d8ec);border:0.6px solid #a9bdd6;border-radius:1.6px 0 0 1.2px;"></div>
<div style="position:absolute;left:88.4px;top:358.2px;font-size:4.9px;line-height:5.9px;color:#a9b4c2;white-space:nowrap;">AU</div>
<svg width="100" height="370" viewBox="0 0 100 370"><rect x="80.6" y="358.2" width="5.4" height="5.4" rx="1.2" fill="#edf3fb" stroke="#a6c2e4" stroke-width="0.6"/><rect x="81.8" y="359.4" width="3" height="1.2" rx="0.4" fill="#cfe0f5" stroke="#9dbde4" stroke-width="0.35"/><rect x="82.2" y="361" width="2.8" height="1.8" rx="0.4" fill="#dbe8f8" stroke="#9dbde4" stroke-width="0.35"/></svg>
<div style="position:absolute;left:95.5px;top:40.2px;width:703.1px;height:326.7px;background:linear-gradient(#a9c5e2 0,#a9c5e2 1px,#9cb6d6 1.2px,#bdd5f0 12.6px,#b9d0ea 13.4px,#b9d0ea 100%);border:0.6px solid #7d9cc0;border-top:1.5px solid #7a7a7a;border-bottom:0.9px solid #4a8a9c;border-right:0.8px solid #4a8a9c;border-radius:2.4px 2.4px 0 0;"></div>
<div style="position:absolute;left:96.1px;top:41.7px;width:0.7px;height:324.4px;background:#dfe9f5;"></div>
<div style="position:absolute;left:798.6px;top:41.0px;width:1.4px;height:370.0px;background:#c9c9c9;"></div>
<svg width="120" height="60" viewBox="0 0 120 60"><rect x="99.8" y="46" width="5.8" height="5.8" rx="1.4" fill="#e3eefa" stroke="#a9c6e8" stroke-width="0.6"/><rect x="101" y="47.4" width="3.4" height="1.2" rx="0.4" fill="#c4dbf4" stroke="#8fb4e2" stroke-width="0.4"/><rect x="101.6" y="49" width="3" height="2" rx="0.4" fill="#d4e5f8" stroke="#8fb4e2" stroke-width="0.4"/></svg>
<div style="position:absolute;left:108.2px;top:46.2px;font-size:5.1px;line-height:6.1px;color:#1a1a1a;white-space:nowrap;transform:scaleX(0.975);transform-origin:0 50%;">AUDCAD,M2 (offline)</div>
<div style="position:absolute;left:753.4px;top:45.6px;width:12.4px;height:6.8px;background:linear-gradient(#dfeaf6,#b4cae3);border:0.5px solid #7f9dbf;border-radius:1.2px;"></div>
<div style="position:absolute;left:767.4px;top:45.6px;width:12.4px;height:6.8px;background:linear-gradient(#dfeaf6,#b4cae3);border:0.5px solid #7f9dbf;border-radius:1.2px;"></div>
<div style="position:absolute;left:781.4px;top:45.6px;width:13.2px;height:6.8px;background:linear-gradient(#e89a88,#c8402a 55%,#d65a42);border:0.5px solid #8a3a2c;border-radius:1.2px;"></div>
<svg width="800" height="60" viewBox="0 0 800 60"><rect x="757.6" y="49" width="4" height="1.5" fill="#fff" stroke="#56677c" stroke-width="0.4"/><rect x="771.6" y="47.4" width="3.8" height="3.2" fill="none" stroke="#e8eef6" stroke-width="0.9"/><path d="M786.4 47.2l3.2 3.4M789.6 47.2l-3.2 3.4" stroke="#fff" stroke-width="1.2"/></svg>
<div style="position:absolute;left:99.3px;top:54.2px;width:695.5px;height:308.5px;background:#000000;border-top:1.2px solid #3a3a3a;border-left:0.8px solid #3a3a3a;"></div>
<svg width="800" height="370" viewBox="0 0 800 370"><path d="M100.8 56.2H775.8V302.4H100.8z" fill="none" stroke="#c8c8c8" stroke-width="0.7"/><path d="M100.8 304H775.8V354.6H100.8z" fill="none" stroke="#c8c8c8" stroke-width="0.7"/><path d="M101 166.3H775.8" stroke="#874a10" stroke-width="1.2"/><path d="M102 66V90" stroke="#c00000" stroke-width="0.6"/><rect x="101.4" y="70.5" width="1.9" height="17.5" fill="#ff0000"/><rect x="103.2" y="76" width="1.4" height="13" fill="#ff0000"/><path d="M105.9 71.5V86" stroke="#b4b4b4" stroke-width="0.6"/><rect x="105" y="74.4" width="1.9" height="8.6" fill="#fff"/><path d="M410.7 258V294" stroke="#c00000" stroke-width="0.7"/><path d="M256 268V288" stroke="#c00000" stroke-width="0.7"/><path d="M309.5 262V277" stroke="#c00000" stroke-width="0.7"/><path d="M354 180V194" stroke="#b4b4b4" stroke-width="0.7"/><path d="M404.4 224V238" stroke="#b4b4b4" stroke-width="0.7"/><path d="M193.6 139V150" stroke="#b4b4b4" stroke-width="0.7"/><path d="M224.4 171V180" stroke="#b4b4b4" stroke-width="0.7"/><path d="M298 207V218" stroke="#b4b4b4" stroke-width="0.7"/><path d="M685.2 144V154" stroke="#b4b4b4" stroke-width="0.7"/><path d="M632.6 182V192" stroke="#c00000" stroke-width="0.7"/><path d="M693.4 188V196" stroke="#c00000" stroke-width="0.7"/><path d="M193.1 152.2V141.8" stroke="#b4b4b4" stroke-width="0.7"/><path d="M196.4 156.2V165.5" stroke="#c00000" stroke-width="0.7"/><path d="M197.7 162.8V172.8" stroke="#c00000" stroke-width="0.7"/><path d="M200.8 166.4V170.9" stroke="#c00000" stroke-width="0.7"/><path d="M204.2 175.5V165.9" stroke="#c00000" stroke-width="0.7"/><path d="M206.2 181.4V193.0" stroke="#c00000" stroke-width="0.7"/><path d="M208.1 187.3V193.9" stroke="#c00000" stroke-width="0.7"/><path d="M213.0 205.0V214.0" stroke="#c00000" stroke-width="0.7"/><path d="M216.4 200.2V194.5" stroke="#b4b4b4" stroke-width="0.7"/><path d="M218.2 195.1V187.8" stroke="#b4b4b4" stroke-width="0.7"/><path d="M219.9 189.9V179.8" stroke="#b4b4b4" stroke-width="0.7"/><path d="M223.4 179.6V167.9" stroke="#b4b4b4" stroke-width="0.7"/><path d="M227.2 187.1V195.9" stroke="#c00000" stroke-width="0.7"/><path d="M230.5 186.7V180.2" stroke="#b4b4b4" stroke-width="0.7"/><path d="M231.3 184.2V176.3" stroke="#b4b4b4" stroke-width="0.7"/><path d="M238.5 202.2V212.0" stroke="#c00000" stroke-width="0.7"/><path d="M248.6 235.2V243.1" stroke="#c00000" stroke-width="0.7"/><path d="M251.5 246.2V252.2" stroke="#c00000" stroke-width="0.7"/><path d="M253.2 251.8V243.9" stroke="#c00000" stroke-width="0.7"/><path d="M260.0 273.8V266.0" stroke="#c00000" stroke-width="0.7"/><path d="M262.2 279.2V286.7" stroke="#c00000" stroke-width="0.7"/><path d="M265.1 274.8V268.2" stroke="#b4b4b4" stroke-width="0.7"/><path d="M267.1 270.0V264.8" stroke="#b4b4b4" stroke-width="0.7"/><path d="M270.8 260.4V250.1" stroke="#b4b4b4" stroke-width="0.7"/><path d="M273.9 265.5V275.5" stroke="#c00000" stroke-width="0.7"/><path d="M277.4 258.2V246.8" stroke="#b4b4b4" stroke-width="0.7"/><path d="M280.5 245.2V238.6" stroke="#b4b4b4" stroke-width="0.7"/><path d="M281.9 238.8V231.4" stroke="#b4b4b4" stroke-width="0.7"/><path d="M283.7 232.2V226.2" stroke="#b4b4b4" stroke-width="0.7"/><path d="M285.2 225.8V216.5" stroke="#b4b4b4" stroke-width="0.7"/><path d="M289.0 237.9V252.0" stroke="#c00000" stroke-width="0.7"/><path d="M293.2 232.5V224.7" stroke="#b4b4b4" stroke-width="0.7"/><path d="M294.9 225.5V236.9" stroke="#b4b4b4" stroke-width="0.7"/><path d="M296.8 218.5V208.3" stroke="#b4b4b4" stroke-width="0.7"/><path d="M300.0 226.7V235.5" stroke="#c00000" stroke-width="0.7"/><path d="M302.1 234.5V227.7" stroke="#c00000" stroke-width="0.7"/><path d="M303.5 242.3V252.3" stroke="#c00000" stroke-width="0.7"/><path d="M308.2 265.7V275.6" stroke="#c00000" stroke-width="0.7"/><path d="M315.0 244.5V255.8" stroke="#b4b4b4" stroke-width="0.7"/><path d="M321.8 215.9V209.4" stroke="#b4b4b4" stroke-width="0.7"/><path d="M325.6 201.6V191.5" stroke="#b4b4b4" stroke-width="0.7"/><path d="M328.8 203.6V215.2" stroke="#c00000" stroke-width="0.7"/><path d="M332.3 201.4V194.0" stroke="#b4b4b4" stroke-width="0.7"/><path d="M335.1 206.0V212.0" stroke="#c00000" stroke-width="0.7"/><path d="M341.2 222.0V231.8" stroke="#c00000" stroke-width="0.7"/><path d="M351.6 202.0V209.2" stroke="#b4b4b4" stroke-width="0.7"/><path d="M353.0 198.0V192.4" stroke="#b4b4b4" stroke-width="0.7"/><path d="M354.8 194.0V183.4" stroke="#b4b4b4" stroke-width="0.7"/><path d="M360.4 203.8V212.6" stroke="#c00000" stroke-width="0.7"/><path d="M363.9 197.7V186.5" stroke="#b4b4b4" stroke-width="0.7"/><path d="M367.8 187.3V175.7" stroke="#b4b4b4" stroke-width="0.7"/><path d="M371.6 195.2V203.0" stroke="#c00000" stroke-width="0.7"/><path d="M374.6 209.2V202.1" stroke="#c00000" stroke-width="0.7"/><path d="M383.4 244.2V253.1" stroke="#c00000" stroke-width="0.7"/><path d="M392.0 279.2V291.2" stroke="#c00000" stroke-width="0.7"/><path d="M396.7 265.7V254.8" stroke="#b4b4b4" stroke-width="0.7"/><path d="M400.5 252.0V242.2" stroke="#b4b4b4" stroke-width="0.7"/><path d="M403.4 238.4V228.0" stroke="#b4b4b4" stroke-width="0.7"/><path d="M410.7 258.6V267.4" stroke="#c00000" stroke-width="0.7"/><path d="M412.3 262.5V272.5" stroke="#c00000" stroke-width="0.7"/><path d="M414.4 266.3V273.2" stroke="#c00000" stroke-width="0.7"/><path d="M415.6 272.9V279.5" stroke="#c00000" stroke-width="0.7"/><path d="M419.2 286.2V297.6" stroke="#c00000" stroke-width="0.7"/><path d="M422.8 278.6V290.4" stroke="#b4b4b4" stroke-width="0.7"/><path d="M427.8 256.9V244.5" stroke="#b4b4b4" stroke-width="0.7"/><path d="M432.1 265.8V272.3" stroke="#c00000" stroke-width="0.7"/><path d="M433.7 270.8V277.2" stroke="#c00000" stroke-width="0.7"/><path d="M437.3 257.3V245.6" stroke="#b4b4b4" stroke-width="0.7"/><path d="M440.1 263.6V273.3" stroke="#c00000" stroke-width="0.7"/><path d="M448.4 245.8V240.3" stroke="#b4b4b4" stroke-width="0.7"/><path d="M450.2 240.9V248.7" stroke="#b4b4b4" stroke-width="0.7"/><path d="M452.3 236.1V242.2" stroke="#b4b4b4" stroke-width="0.7"/><path d="M455.2 226.4V219.9" stroke="#b4b4b4" stroke-width="0.7"/><path d="M457.4 236.8V250.6" stroke="#c00000" stroke-width="0.7"/><path d="M465.2 216.9V205.4" stroke="#b4b4b4" stroke-width="0.7"/><path d="M469.3 226.8V236.8" stroke="#c00000" stroke-width="0.7"/><path d="M474.3 219.8V211.5" stroke="#b4b4b4" stroke-width="0.7"/><path d="M475.9 215.2V208.2" stroke="#b4b4b4" stroke-width="0.7"/><path d="M477.8 220.7V230.2" stroke="#c00000" stroke-width="0.7"/><path d="M481.3 212.5V202.0" stroke="#b4b4b4" stroke-width="0.7"/><path d="M482.9 206.2V198.1" stroke="#b4b4b4" stroke-width="0.7"/><path d="M486.3 212.5V220.0" stroke="#c00000" stroke-width="0.7"/><path d="M488.5 218.8V229.1" stroke="#c00000" stroke-width="0.7"/><path d="M493.7 204.9V193.8" stroke="#b4b4b4" stroke-width="0.7"/><path d="M503.0 163.8V154.5" stroke="#b4b4b4" stroke-width="0.7"/><path d="M506.2 167.6V173.3" stroke="#c00000" stroke-width="0.7"/><path d="M508.1 172.5V166.7" stroke="#c00000" stroke-width="0.7"/><path d="M511.6 182.1V189.1" stroke="#c00000" stroke-width="0.7"/><path d="M518.6 201.4V213.4" stroke="#c00000" stroke-width="0.7"/><path d="M522.0 195.2V189.6" stroke="#b4b4b4" stroke-width="0.7"/><path d="M525.3 183.8V174.2" stroke="#b4b4b4" stroke-width="0.7"/><path d="M529.0 185.5V192.4" stroke="#c00000" stroke-width="0.7"/><path d="M532.9 182.2V177.5" stroke="#b4b4b4" stroke-width="0.7"/><path d="M534.9 179.0V172.2" stroke="#b4b4b4" stroke-width="0.7"/><path d="M538.8 183.8V193.0" stroke="#c00000" stroke-width="0.7"/><path d="M542.6 169.5V156.3" stroke="#b4b4b4" stroke-width="0.7"/><path d="M546.5 171.2V182.7" stroke="#c00000" stroke-width="0.7"/><path d="M550.0 162.9V150.6" stroke="#b4b4b4" stroke-width="0.7"/><path d="M553.5 148.6V136.2" stroke="#b4b4b4" stroke-width="0.7"/><path d="M560.9 163.4V172.9" stroke="#c00000" stroke-width="0.7"/><path d="M568.5 148.9V137.3" stroke="#b4b4b4" stroke-width="0.7"/><path d="M571.7 157.4V169.0" stroke="#c00000" stroke-width="0.7"/><path d="M574.8 149.5V142.1" stroke="#b4b4b4" stroke-width="0.7"/><path d="M576.5 141.8V129.2" stroke="#b4b4b4" stroke-width="0.7"/><path d="M583.3 156.5V166.7" stroke="#c00000" stroke-width="0.7"/><path d="M586.6 167.1V173.9" stroke="#c00000" stroke-width="0.7"/><path d="M589.9 159.3V152.5" stroke="#b4b4b4" stroke-width="0.7"/><path d="M591.6 152.3V163.0" stroke="#b4b4b4" stroke-width="0.7"/><path d="M593.0 145.3V136.2" stroke="#b4b4b4" stroke-width="0.7"/><path d="M596.4 131.4V124.3" stroke="#b4b4b4" stroke-width="0.7"/><path d="M598.1 124.5V115.4" stroke="#b4b4b4" stroke-width="0.7"/><path d="M601.5 131.3V138.0" stroke="#c00000" stroke-width="0.7"/><path d="M605.2 145.2V154.1" stroke="#c00000" stroke-width="0.7"/><path d="M610.0 135.4V124.6" stroke="#b4b4b4" stroke-width="0.7"/><path d="M615.1 119.6V107.4" stroke="#b4b4b4" stroke-width="0.7"/><path d="M618.2 126.8V119.5" stroke="#c00000" stroke-width="0.7"/><path d="M623.6 146.4V157.4" stroke="#c00000" stroke-width="0.7"/><path d="M628.4 166.1V172.1" stroke="#c00000" stroke-width="0.7"/><path d="M630.0 172.6V179.5" stroke="#c00000" stroke-width="0.7"/><path d="M631.6 179.1V191.2" stroke="#c00000" stroke-width="0.7"/><path d="M636.8 167.2V155.8" stroke="#b4b4b4" stroke-width="0.7"/><path d="M638.4 161.2V153.1" stroke="#b4b4b4" stroke-width="0.7"/><path d="M641.1 149.0V139.6" stroke="#b4b4b4" stroke-width="0.7"/><path d="M642.7 143.2V149.4" stroke="#b4b4b4" stroke-width="0.7"/><path d="M646.0 132.2V123.6" stroke="#b4b4b4" stroke-width="0.7"/><path d="M649.7 121.2V109.8" stroke="#b4b4b4" stroke-width="0.7"/><path d="M654.8 106.4V96.8" stroke="#b4b4b4" stroke-width="0.7"/><path d="M658.0 96.8V86.0" stroke="#b4b4b4" stroke-width="0.7"/><path d="M659.9 91.9V83.6" stroke="#b4b4b4" stroke-width="0.7"/><path d="M665.2 106.1V116.2" stroke="#c00000" stroke-width="0.7"/><path d="M666.5 112.8V119.9" stroke="#c00000" stroke-width="0.7"/><path d="M669.7 126.1V114.5" stroke="#c00000" stroke-width="0.7"/><path d="M671.3 132.8V140.0" stroke="#c00000" stroke-width="0.7"/><path d="M672.9 139.4V147.0" stroke="#c00000" stroke-width="0.7"/><path d="M676.4 152.7V161.3" stroke="#c00000" stroke-width="0.7"/><path d="M677.8 159.4V165.9" stroke="#c00000" stroke-width="0.7"/><path d="M679.8 166.0V175.2" stroke="#c00000" stroke-width="0.7"/><path d="M681.3 172.7V181.1" stroke="#c00000" stroke-width="0.7"/><path d="M683.9 163.3V153.9" stroke="#b4b4b4" stroke-width="0.7"/><path d="M685.8 154.9V141.8" stroke="#b4b4b4" stroke-width="0.7"/><path d="M688.7 162.7V169.7" stroke="#c00000" stroke-width="0.7"/><path d="M691.6 178.8V169.6" stroke="#c00000" stroke-width="0.7"/><path d="M693.3 186.8V199.7" stroke="#c00000" stroke-width="0.7"/><path d="M696.6 178.2V170.5" stroke="#b4b4b4" stroke-width="0.7"/><path d="M698.0 169.7V157.6" stroke="#b4b4b4" stroke-width="0.7"/><path d="M700.4 177.8V193.2" stroke="#c00000" stroke-width="0.7"/><path d="M704.4 169.1V157.1" stroke="#b4b4b4" stroke-width="0.7"/><rect x="191.3" y="145.7" width="3.0" height="13.1" fill="#ffffff"/><rect x="194.6" y="152.2" width="3.0" height="8.1" fill="#ff0000"/><rect x="195.9" y="158.7" width="3.0" height="8.1" fill="#ff0000"/><rect x="197.5" y="165.2" width="3.0" height="1.9" fill="#ff0000"/><rect x="199.0" y="165.5" width="3.0" height="1.9" fill="#ff0000"/><rect x="200.9" y="165.8" width="3.0" height="7.5" fill="#ff0000"/><rect x="202.4" y="171.7" width="3.0" height="7.5" fill="#ff0000"/><rect x="204.4" y="177.6" width="3.0" height="7.5" fill="#ff0000"/><rect x="206.3" y="183.5" width="3.0" height="7.5" fill="#ff0000"/><rect x="207.6" y="189.5" width="3.0" height="7.5" fill="#ff0000"/><rect x="209.1" y="195.4" width="3.0" height="7.5" fill="#ff0000"/><rect x="211.2" y="201.3" width="3.0" height="7.5" fill="#ff0000"/><rect x="214.6" y="196.9" width="3.0" height="6.8" fill="#ffffff"/><rect x="216.4" y="191.7" width="3.0" height="6.8" fill="#ffffff"/><rect x="218.1" y="186.5" width="3.0" height="6.8" fill="#ffffff"/><rect x="219.7" y="181.4" width="3.0" height="6.8" fill="#ffffff"/><rect x="221.6" y="176.2" width="3.0" height="6.8" fill="#ffffff"/><rect x="225.4" y="182.9" width="3.0" height="8.3" fill="#ff0000"/><rect x="228.7" y="184.7" width="3.0" height="4.1" fill="#ffffff"/><rect x="229.5" y="182.2" width="3.0" height="4.1" fill="#ffffff"/><rect x="232.7" y="187.7" width="3.0" height="7.1" fill="#ff0000"/><rect x="234.9" y="193.2" width="3.0" height="7.1" fill="#ff0000"/><rect x="236.7" y="198.7" width="3.0" height="7.1" fill="#ff0000"/><rect x="238.2" y="204.2" width="3.0" height="7.1" fill="#ff0000"/><rect x="240.0" y="209.7" width="3.0" height="7.1" fill="#ff0000"/><rect x="241.5" y="215.2" width="3.0" height="7.1" fill="#ff0000"/><rect x="242.9" y="220.7" width="3.0" height="7.1" fill="#ff0000"/><rect x="245.0" y="226.2" width="3.0" height="7.1" fill="#ff0000"/><rect x="246.8" y="231.7" width="3.0" height="7.1" fill="#ff0000"/><rect x="247.9" y="237.2" width="3.0" height="7.1" fill="#ff0000"/><rect x="249.7" y="242.7" width="3.0" height="7.1" fill="#ff0000"/><rect x="251.4" y="248.2" width="3.0" height="7.1" fill="#ff0000"/><rect x="253.0" y="253.7" width="3.0" height="7.1" fill="#ff0000"/><rect x="255.0" y="259.2" width="3.0" height="7.1" fill="#ff0000"/><rect x="256.9" y="264.7" width="3.0" height="7.1" fill="#ff0000"/><rect x="258.2" y="270.2" width="3.0" height="7.1" fill="#ff0000"/><rect x="260.4" y="275.7" width="3.0" height="7.1" fill="#ff0000"/><rect x="263.3" y="271.6" width="3.0" height="6.4" fill="#ffffff"/><rect x="265.3" y="266.8" width="3.0" height="6.4" fill="#ffffff"/><rect x="266.8" y="262.0" width="3.0" height="6.4" fill="#ffffff"/><rect x="269.0" y="257.2" width="3.0" height="6.4" fill="#ffffff"/><rect x="272.1" y="262.2" width="3.0" height="6.6" fill="#ff0000"/><rect x="275.6" y="254.2" width="3.0" height="8.1" fill="#ffffff"/><rect x="277.4" y="247.7" width="3.0" height="8.1" fill="#ffffff"/><rect x="278.7" y="241.2" width="3.0" height="8.1" fill="#ffffff"/><rect x="280.1" y="234.7" width="3.0" height="8.1" fill="#ffffff"/><rect x="281.9" y="228.2" width="3.0" height="8.1" fill="#ffffff"/><rect x="283.4" y="221.7" width="3.0" height="8.1" fill="#ffffff"/><rect x="287.2" y="231.9" width="3.0" height="11.8" fill="#ff0000"/><rect x="291.4" y="228.2" width="3.0" height="8.6" fill="#ffffff"/><rect x="293.1" y="221.2" width="3.0" height="8.6" fill="#ffffff"/><rect x="295.0" y="214.2" width="3.0" height="8.6" fill="#ffffff"/><rect x="298.2" y="222.0" width="3.0" height="9.4" fill="#ff0000"/><rect x="300.3" y="229.8" width="3.0" height="9.4" fill="#ff0000"/><rect x="301.7" y="237.6" width="3.0" height="9.4" fill="#ff0000"/><rect x="303.3" y="245.4" width="3.0" height="9.4" fill="#ff0000"/><rect x="305.2" y="253.2" width="3.0" height="9.4" fill="#ff0000"/><rect x="306.4" y="261.0" width="3.0" height="9.4" fill="#ff0000"/><rect x="309.7" y="254.5" width="3.0" height="8.8" fill="#ffffff"/><rect x="311.6" y="247.3" width="3.0" height="8.8" fill="#ffffff"/><rect x="313.2" y="240.2" width="3.0" height="8.8" fill="#ffffff"/><rect x="315.3" y="233.0" width="3.0" height="8.8" fill="#ffffff"/><rect x="316.9" y="225.8" width="3.0" height="8.8" fill="#ffffff"/><rect x="318.2" y="218.7" width="3.0" height="8.8" fill="#ffffff"/><rect x="320.0" y="211.5" width="3.0" height="8.8" fill="#ffffff"/><rect x="321.6" y="204.4" width="3.0" height="8.8" fill="#ffffff"/><rect x="323.8" y="197.2" width="3.0" height="8.8" fill="#ffffff"/><rect x="327.0" y="200.9" width="3.0" height="5.3" fill="#ff0000"/><rect x="330.5" y="199.2" width="3.0" height="4.3" fill="#ffffff"/><rect x="333.3" y="203.2" width="3.0" height="5.6" fill="#ff0000"/><rect x="335.1" y="207.2" width="3.0" height="5.6" fill="#ff0000"/><rect x="336.8" y="211.2" width="3.0" height="5.6" fill="#ff0000"/><rect x="338.3" y="215.2" width="3.0" height="5.6" fill="#ff0000"/><rect x="339.4" y="219.2" width="3.0" height="5.6" fill="#ff0000"/><rect x="343.2" y="215.2" width="3.0" height="5.6" fill="#ffffff"/><rect x="344.7" y="211.2" width="3.0" height="5.6" fill="#ffffff"/><rect x="346.0" y="207.2" width="3.0" height="5.6" fill="#ffffff"/><rect x="347.7" y="203.2" width="3.0" height="5.6" fill="#ffffff"/><rect x="349.8" y="199.2" width="3.0" height="5.6" fill="#ffffff"/><rect x="351.2" y="195.2" width="3.0" height="5.6" fill="#ffffff"/><rect x="353.0" y="191.2" width="3.0" height="5.6" fill="#ffffff"/><rect x="355.5" y="194.6" width="3.0" height="5.0" fill="#ff0000"/><rect x="357.6" y="197.9" width="3.0" height="5.0" fill="#ff0000"/><rect x="358.6" y="201.3" width="3.0" height="5.0" fill="#ff0000"/><rect x="362.1" y="194.3" width="3.0" height="6.8" fill="#ffffff"/><rect x="364.2" y="189.1" width="3.0" height="6.8" fill="#ffffff"/><rect x="366.0" y="183.9" width="3.0" height="6.8" fill="#ffffff"/><rect x="369.8" y="190.9" width="3.0" height="8.6" fill="#ff0000"/><rect x="371.1" y="197.9" width="3.0" height="8.6" fill="#ff0000"/><rect x="372.8" y="204.9" width="3.0" height="8.6" fill="#ff0000"/><rect x="374.6" y="211.9" width="3.0" height="8.6" fill="#ff0000"/><rect x="376.5" y="218.9" width="3.0" height="8.6" fill="#ff0000"/><rect x="378.1" y="225.9" width="3.0" height="8.6" fill="#ff0000"/><rect x="379.9" y="232.9" width="3.0" height="8.6" fill="#ff0000"/><rect x="381.6" y="239.9" width="3.0" height="8.6" fill="#ff0000"/><rect x="382.9" y="246.9" width="3.0" height="8.6" fill="#ff0000"/><rect x="384.8" y="253.9" width="3.0" height="8.6" fill="#ff0000"/><rect x="386.9" y="260.9" width="3.0" height="8.6" fill="#ff0000"/><rect x="388.3" y="267.9" width="3.0" height="8.6" fill="#ff0000"/><rect x="390.2" y="274.9" width="3.0" height="8.6" fill="#ff0000"/><rect x="393.2" y="268.3" width="3.0" height="8.4" fill="#ffffff"/><rect x="394.9" y="261.5" width="3.0" height="8.4" fill="#ffffff"/><rect x="396.8" y="254.6" width="3.0" height="8.4" fill="#ffffff"/><rect x="398.7" y="247.8" width="3.0" height="8.4" fill="#ffffff"/><rect x="400.0" y="241.0" width="3.0" height="8.4" fill="#ffffff"/><rect x="401.6" y="234.2" width="3.0" height="8.4" fill="#ffffff"/><rect x="405.1" y="240.9" width="3.0" height="8.3" fill="#ff0000"/><rect x="407.0" y="247.7" width="3.0" height="8.3" fill="#ff0000"/><rect x="408.9" y="254.4" width="3.0" height="8.3" fill="#ff0000"/><rect x="410.5" y="261.2" width="3.0" height="2.6" fill="#ff0000"/><rect x="412.6" y="262.2" width="3.0" height="8.2" fill="#ff0000"/><rect x="413.8" y="268.8" width="3.0" height="8.2" fill="#ff0000"/><rect x="416.1" y="275.4" width="3.0" height="8.2" fill="#ff0000"/><rect x="417.4" y="282.1" width="3.0" height="8.2" fill="#ff0000"/><rect x="421.0" y="274.2" width="3.0" height="8.8" fill="#ffffff"/><rect x="422.3" y="267.0" width="3.0" height="8.8" fill="#ffffff"/><rect x="424.0" y="259.7" width="3.0" height="8.8" fill="#ffffff"/><rect x="426.0" y="252.5" width="3.0" height="8.8" fill="#ffffff"/><rect x="428.5" y="257.5" width="3.0" height="6.6" fill="#ff0000"/><rect x="430.3" y="262.5" width="3.0" height="6.6" fill="#ff0000"/><rect x="431.9" y="267.5" width="3.0" height="6.6" fill="#ff0000"/><rect x="435.5" y="251.2" width="3.0" height="12.3" fill="#ffffff"/><rect x="438.3" y="258.9" width="3.0" height="9.3" fill="#ff0000"/><rect x="441.9" y="257.0" width="3.0" height="6.4" fill="#ffffff"/><rect x="443.2" y="252.2" width="3.0" height="6.4" fill="#ffffff"/><rect x="445.4" y="247.4" width="3.0" height="6.4" fill="#ffffff"/><rect x="446.6" y="242.5" width="3.0" height="6.4" fill="#ffffff"/><rect x="448.4" y="237.7" width="3.0" height="6.4" fill="#ffffff"/><rect x="450.5" y="232.9" width="3.0" height="6.4" fill="#ffffff"/><rect x="452.0" y="228.0" width="3.0" height="6.4" fill="#ffffff"/><rect x="453.4" y="223.2" width="3.0" height="6.4" fill="#ffffff"/><rect x="455.6" y="228.4" width="3.0" height="16.6" fill="#ff0000"/><rect x="458.6" y="228.4" width="3.0" height="6.5" fill="#ffffff"/><rect x="460.6" y="223.4" width="3.0" height="6.5" fill="#ffffff"/><rect x="461.8" y="218.5" width="3.0" height="6.5" fill="#ffffff"/><rect x="463.4" y="213.6" width="3.0" height="6.5" fill="#ffffff"/><rect x="467.5" y="221.9" width="3.0" height="9.9" fill="#ff0000"/><rect x="471.0" y="221.2" width="3.0" height="6.1" fill="#ffffff"/><rect x="472.5" y="216.7" width="3.0" height="6.1" fill="#ffffff"/><rect x="474.1" y="212.2" width="3.0" height="6.1" fill="#ffffff"/><rect x="476.0" y="215.3" width="3.0" height="10.6" fill="#ff0000"/><rect x="479.5" y="208.5" width="3.0" height="7.9" fill="#ffffff"/><rect x="481.1" y="202.2" width="3.0" height="7.9" fill="#ffffff"/><rect x="484.5" y="208.5" width="3.0" height="7.9" fill="#ff0000"/><rect x="486.7" y="214.9" width="3.0" height="7.9" fill="#ff0000"/><rect x="489.7" y="207.5" width="3.0" height="8.4" fill="#ffffff"/><rect x="491.9" y="200.7" width="3.0" height="8.4" fill="#ffffff"/><rect x="493.2" y="193.8" width="3.0" height="8.4" fill="#ffffff"/><rect x="494.7" y="187.0" width="3.0" height="8.4" fill="#ffffff"/><rect x="496.6" y="180.1" width="3.0" height="8.4" fill="#ffffff"/><rect x="497.9" y="173.3" width="3.0" height="8.4" fill="#ffffff"/><rect x="499.8" y="166.4" width="3.0" height="8.4" fill="#ffffff"/><rect x="501.2" y="159.6" width="3.0" height="8.4" fill="#ffffff"/><rect x="504.4" y="164.4" width="3.0" height="6.4" fill="#ff0000"/><rect x="506.3" y="169.2" width="3.0" height="6.4" fill="#ff0000"/><rect x="508.5" y="174.1" width="3.0" height="6.4" fill="#ff0000"/><rect x="509.8" y="178.9" width="3.0" height="6.4" fill="#ff0000"/><rect x="511.5" y="183.7" width="3.0" height="6.4" fill="#ff0000"/><rect x="513.3" y="188.5" width="3.0" height="6.4" fill="#ff0000"/><rect x="515.6" y="193.4" width="3.0" height="6.4" fill="#ff0000"/><rect x="516.8" y="198.2" width="3.0" height="6.4" fill="#ff0000"/><rect x="520.2" y="191.6" width="3.0" height="7.3" fill="#ffffff"/><rect x="522.0" y="185.9" width="3.0" height="7.3" fill="#ffffff"/><rect x="523.5" y="180.2" width="3.0" height="7.3" fill="#ffffff"/><rect x="527.2" y="183.2" width="3.0" height="4.6" fill="#ff0000"/><rect x="531.1" y="179.8" width="3.0" height="4.8" fill="#ffffff"/><rect x="533.1" y="176.6" width="3.0" height="4.8" fill="#ffffff"/><rect x="537.0" y="180.9" width="3.0" height="5.9" fill="#ff0000"/><rect x="540.8" y="163.2" width="3.0" height="12.6" fill="#ffffff"/><rect x="544.7" y="168.0" width="3.0" height="6.4" fill="#ff0000"/><rect x="548.2" y="158.5" width="3.0" height="8.7" fill="#ffffff"/><rect x="550.3" y="151.3" width="3.0" height="8.7" fill="#ffffff"/><rect x="551.7" y="144.2" width="3.0" height="8.7" fill="#ffffff"/><rect x="556.0" y="149.4" width="3.0" height="6.8" fill="#ff0000"/><rect x="557.7" y="154.7" width="3.0" height="6.8" fill="#ff0000"/><rect x="559.1" y="159.9" width="3.0" height="6.8" fill="#ff0000"/><rect x="563.0" y="155.4" width="3.0" height="6.5" fill="#ffffff"/><rect x="565.0" y="150.6" width="3.0" height="6.5" fill="#ffffff"/><rect x="566.7" y="145.7" width="3.0" height="6.5" fill="#ffffff"/><rect x="569.9" y="152.9" width="3.0" height="8.8" fill="#ff0000"/><rect x="573.0" y="144.9" width="3.0" height="9.3" fill="#ffffff"/><rect x="574.7" y="137.2" width="3.0" height="9.3" fill="#ffffff"/><rect x="578.3" y="142.5" width="3.0" height="6.9" fill="#ff0000"/><rect x="580.0" y="147.8" width="3.0" height="6.9" fill="#ff0000"/><rect x="581.5" y="153.1" width="3.0" height="6.9" fill="#ff0000"/><rect x="583.1" y="158.3" width="3.0" height="6.9" fill="#ff0000"/><rect x="584.8" y="163.6" width="3.0" height="6.9" fill="#ff0000"/><rect x="588.1" y="155.0" width="3.0" height="8.6" fill="#ffffff"/><rect x="589.8" y="148.0" width="3.0" height="8.6" fill="#ffffff"/><rect x="591.2" y="141.1" width="3.0" height="8.6" fill="#ffffff"/><rect x="593.1" y="134.1" width="3.0" height="8.6" fill="#ffffff"/><rect x="594.6" y="127.2" width="3.0" height="8.6" fill="#ffffff"/><rect x="596.3" y="120.2" width="3.0" height="8.6" fill="#ffffff"/><rect x="599.7" y="127.1" width="3.0" height="8.5" fill="#ff0000"/><rect x="601.6" y="134.0" width="3.0" height="8.5" fill="#ff0000"/><rect x="603.4" y="140.9" width="3.0" height="8.5" fill="#ff0000"/><rect x="606.6" y="137.3" width="3.0" height="6.9" fill="#ffffff"/><rect x="608.2" y="132.0" width="3.0" height="6.9" fill="#ffffff"/><rect x="610.2" y="126.7" width="3.0" height="6.9" fill="#ffffff"/><rect x="611.1" y="121.5" width="3.0" height="6.9" fill="#ffffff"/><rect x="613.3" y="116.2" width="3.0" height="6.9" fill="#ffffff"/><rect x="616.4" y="122.7" width="3.0" height="8.1" fill="#ff0000"/><rect x="617.9" y="129.3" width="3.0" height="8.1" fill="#ff0000"/><rect x="619.6" y="135.8" width="3.0" height="8.1" fill="#ff0000"/><rect x="621.8" y="142.4" width="3.0" height="8.1" fill="#ff0000"/><rect x="623.5" y="148.9" width="3.0" height="8.1" fill="#ff0000"/><rect x="624.7" y="155.4" width="3.0" height="8.1" fill="#ff0000"/><rect x="626.6" y="162.0" width="3.0" height="8.1" fill="#ff0000"/><rect x="628.2" y="168.5" width="3.0" height="8.1" fill="#ff0000"/><rect x="629.8" y="175.1" width="3.0" height="8.1" fill="#ff0000"/><rect x="632.8" y="169.5" width="3.0" height="7.7" fill="#ffffff"/><rect x="635.0" y="163.4" width="3.0" height="7.7" fill="#ffffff"/><rect x="636.6" y="157.3" width="3.0" height="7.7" fill="#ffffff"/><rect x="638.2" y="151.3" width="3.0" height="7.7" fill="#ffffff"/><rect x="639.3" y="145.2" width="3.0" height="7.7" fill="#ffffff"/><rect x="640.9" y="139.7" width="3.0" height="7.1" fill="#ffffff"/><rect x="642.5" y="134.2" width="3.0" height="7.1" fill="#ffffff"/><rect x="644.2" y="128.7" width="3.0" height="7.1" fill="#ffffff"/><rect x="645.9" y="123.2" width="3.0" height="7.1" fill="#ffffff"/><rect x="647.9" y="117.7" width="3.0" height="7.1" fill="#ffffff"/><rect x="649.5" y="112.9" width="3.0" height="6.4" fill="#ffffff"/><rect x="651.4" y="108.0" width="3.0" height="6.4" fill="#ffffff"/><rect x="653.0" y="103.2" width="3.0" height="6.4" fill="#ffffff"/><rect x="654.8" y="98.4" width="3.0" height="6.4" fill="#ffffff"/><rect x="656.2" y="93.5" width="3.0" height="6.4" fill="#ffffff"/><rect x="658.1" y="88.7" width="3.0" height="6.4" fill="#ffffff"/><rect x="661.3" y="95.4" width="3.0" height="8.3" fill="#ff0000"/><rect x="663.4" y="102.0" width="3.0" height="8.3" fill="#ff0000"/><rect x="664.7" y="108.7" width="3.0" height="8.3" fill="#ff0000"/><rect x="666.1" y="115.3" width="3.0" height="8.3" fill="#ff0000"/><rect x="667.9" y="122.0" width="3.0" height="8.3" fill="#ff0000"/><rect x="669.5" y="128.6" width="3.0" height="8.3" fill="#ff0000"/><rect x="671.1" y="135.3" width="3.0" height="8.3" fill="#ff0000"/><rect x="672.8" y="141.9" width="3.0" height="8.3" fill="#ff0000"/><rect x="674.6" y="148.6" width="3.0" height="8.3" fill="#ff0000"/><rect x="676.0" y="155.2" width="3.0" height="8.3" fill="#ff0000"/><rect x="678.0" y="161.9" width="3.0" height="8.3" fill="#ff0000"/><rect x="679.5" y="168.5" width="3.0" height="8.3" fill="#ff0000"/><rect x="682.1" y="158.3" width="3.0" height="10.0" fill="#ffffff"/><rect x="684.0" y="149.9" width="3.0" height="10.0" fill="#ffffff"/><rect x="686.9" y="157.9" width="3.0" height="9.6" fill="#ff0000"/><rect x="688.5" y="165.9" width="3.0" height="9.6" fill="#ff0000"/><rect x="689.8" y="174.0" width="3.0" height="9.6" fill="#ff0000"/><rect x="691.5" y="182.0" width="3.0" height="9.6" fill="#ff0000"/><rect x="694.8" y="173.1" width="3.0" height="10.0" fill="#ffffff"/><rect x="696.2" y="164.7" width="3.0" height="10.0" fill="#ffffff"/><rect x="698.6" y="169.8" width="3.0" height="16.1" fill="#ff0000"/><rect x="702.6" y="164.7" width="3.0" height="8.8" fill="#ffffff"/><path d="M103.1 82.5L105.9 85.3" stroke="#fff000" stroke-width="1.4"/><path d="M107.5 82.8V86.9H103.4z" fill="#fff000"/><path d="M193.6 148.7L196.4 151.5" stroke="#fff000" stroke-width="1.4"/><path d="M198.0 149.0V153.1H193.9z" fill="#fff000"/><path d="M223.7 176.9L226.5 179.7" stroke="#fff000" stroke-width="1.4"/><path d="M228.1 177.2V181.3H224.0z" fill="#fff000"/><path d="M231.9 180.9L234.7 183.7" stroke="#fff000" stroke-width="1.4"/><path d="M236.3 181.2V185.3H232.2z" fill="#fff000"/><path d="M285.3 217.3L288.1 220.1" stroke="#fff000" stroke-width="1.4"/><path d="M289.7 217.6V221.7H285.6z" fill="#fff000"/><path d="M325.9 198.9L328.7 201.7" stroke="#fff000" stroke-width="1.4"/><path d="M330.3 199.2V203.3H326.2z" fill="#fff000"/><path d="M332.4 198.9L335.2 201.7" stroke="#fff000" stroke-width="1.4"/><path d="M336.8 199.2V203.3H332.7z" fill="#fff000"/><path d="M356.9 178.9L359.7 181.7" stroke="#fff000" stroke-width="1.4"/><path d="M361.3 179.2V183.3H357.2z" fill="#fff000"/><path d="M368.9 184.5L371.7 187.3" stroke="#fff000" stroke-width="1.4"/><path d="M373.3 184.8V188.9H369.2z" fill="#fff000"/><path d="M403.4 235.4L406.2 238.2" stroke="#fff000" stroke-width="1.4"/><path d="M407.8 235.7V239.8H403.7z" fill="#fff000"/><path d="M427.9 256.9L430.7 259.7" stroke="#fff000" stroke-width="1.4"/><path d="M432.3 257.2V261.3H428.2z" fill="#fff000"/><path d="M437.9 257.9L440.7 260.7" stroke="#fff000" stroke-width="1.4"/><path d="M442.3 258.2V262.3H438.2z" fill="#fff000"/><path d="M454.9 222.9L457.7 225.7" stroke="#fff000" stroke-width="1.4"/><path d="M459.3 223.2V227.3H455.2z" fill="#fff000"/><path d="M465.6 210.9L468.4 213.7" stroke="#fff000" stroke-width="1.4"/><path d="M470.0 211.2V215.3H465.9z" fill="#fff000"/><path d="M483.4 197.9L486.2 200.7" stroke="#fff000" stroke-width="1.4"/><path d="M487.8 198.2V202.3H483.7z" fill="#fff000"/><path d="M504.5 163.9L507.3 166.7" stroke="#fff000" stroke-width="1.4"/><path d="M508.9 164.2V168.3H504.8z" fill="#fff000"/><path d="M533.6 176.9L536.4 179.7" stroke="#fff000" stroke-width="1.4"/><path d="M538.0 177.2V181.3H533.9z" fill="#fff000"/><path d="M541.9 159.9L544.7 162.7" stroke="#fff000" stroke-width="1.4"/><path d="M546.3 160.2V164.3H542.2z" fill="#fff000"/><path d="M557.3 135.9L560.1 138.7" stroke="#fff000" stroke-width="1.4"/><path d="M561.7 136.2V140.3H557.6z" fill="#fff000"/><path d="M569.9 141.4L572.7 144.2" stroke="#fff000" stroke-width="1.4"/><path d="M574.3 141.7V145.8H570.2z" fill="#fff000"/><path d="M578.7 132.9L581.5 135.7" stroke="#fff000" stroke-width="1.4"/><path d="M583.1 133.2V137.3H579.0z" fill="#fff000"/><path d="M598.5 115.7L601.3 118.5" stroke="#fff000" stroke-width="1.4"/><path d="M602.9 116.0V120.1H598.8z" fill="#fff000"/><path d="M617.5 121.2L620.3 124.0" stroke="#fff000" stroke-width="1.4"/><path d="M621.9 121.5V125.6H617.8z" fill="#fff000"/><path d="M660.6 86.2L663.4 89.0" stroke="#fff000" stroke-width="1.4"/><path d="M665.0 86.5V90.6H660.9z" fill="#fff000"/><path d="M684.9 155.9L687.7 158.7" stroke="#fff000" stroke-width="1.4"/><path d="M689.3 156.2V160.3H685.2z" fill="#fff000"/><path d="M698.9 163.4L701.7 166.2" stroke="#fff000" stroke-width="1.4"/><path d="M703.3 163.7V167.8H699.2z" fill="#fff000"/><path d="M214.9 207.6L217.7 204.8" stroke="#fff000" stroke-width="1.4"/><path d="M219.3 207.3V203.2H215.2z" fill="#fff000"/><path d="M265.3 285.1L268.1 282.3" stroke="#fff000" stroke-width="1.4"/><path d="M269.7 284.8V280.7H265.6z" fill="#fff000"/><path d="M289.9 243.1L292.7 240.3" stroke="#fff000" stroke-width="1.4"/><path d="M294.3 242.8V238.7H290.2z" fill="#fff000"/><path d="M308.7 274.7L311.5 271.9" stroke="#fff000" stroke-width="1.4"/><path d="M313.1 274.4V270.3H309.0z" fill="#fff000"/><path d="M328.7 220.1L331.5 217.3" stroke="#fff000" stroke-width="1.4"/><path d="M333.1 219.8V215.7H329.0z" fill="#fff000"/><path d="M341.9 222.7L344.7 219.9" stroke="#fff000" stroke-width="1.4"/><path d="M346.3 222.4V218.3H342.2z" fill="#fff000"/><path d="M361.9 209.5L364.7 206.7" stroke="#fff000" stroke-width="1.4"/><path d="M366.3 209.2V205.1H362.2z" fill="#fff000"/><path d="M391.7 292.5L394.5 289.7" stroke="#fff000" stroke-width="1.4"/><path d="M396.1 292.2V288.1H392.0z" fill="#fff000"/><path d="M419.9 286.8L422.7 284.0" stroke="#fff000" stroke-width="1.4"/><path d="M424.3 286.5V282.4H420.2z" fill="#fff000"/><path d="M433.2 273.6L436.0 270.8" stroke="#fff000" stroke-width="1.4"/><path d="M437.6 273.3V269.2H433.5z" fill="#fff000"/><path d="M441.9 268.7L444.7 265.9" stroke="#fff000" stroke-width="1.4"/><path d="M446.3 268.4V264.3H442.2z" fill="#fff000"/><path d="M428.5 260.9L431.3 258.1" stroke="#fff000" stroke-width="1.4"/><path d="M432.9 260.6V256.5H428.8z" fill="#fff000"/><path d="M438.9 264.1L441.7 261.3" stroke="#fff000" stroke-width="1.4"/><path d="M443.3 263.8V259.7H439.2z" fill="#fff000"/><path d="M458.9 243.6L461.7 240.8" stroke="#fff000" stroke-width="1.4"/><path d="M463.3 243.3V239.2H459.2z" fill="#fff000"/><path d="M470.5 243.6L473.3 240.8" stroke="#fff000" stroke-width="1.4"/><path d="M474.9 243.3V239.2H470.8z" fill="#fff000"/><path d="M488.3 234.9L491.1 232.1" stroke="#fff000" stroke-width="1.4"/><path d="M492.7 234.6V230.5H488.6z" fill="#fff000"/><path d="M520.9 205.9L523.7 203.1" stroke="#fff000" stroke-width="1.4"/><path d="M525.3 205.6V201.5H521.2z" fill="#fff000"/><path d="M537.3 188.9L540.1 186.1" stroke="#fff000" stroke-width="1.4"/><path d="M541.7 188.6V184.5H537.6z" fill="#fff000"/><path d="M545.6 179.5L548.4 176.7" stroke="#fff000" stroke-width="1.4"/><path d="M550.0 179.2V175.1H545.9z" fill="#fff000"/><path d="M561.9 169.1L564.7 166.3" stroke="#fff000" stroke-width="1.4"/><path d="M566.3 168.8V164.7H562.2z" fill="#fff000"/><path d="M572.9 158.1L575.7 155.3" stroke="#fff000" stroke-width="1.4"/><path d="M577.3 157.8V153.7H573.2z" fill="#fff000"/><path d="M588.9 171.8L591.7 169.0" stroke="#fff000" stroke-width="1.4"/><path d="M593.3 171.5V167.4H589.2z" fill="#fff000"/><path d="M605.7 150.7L608.5 147.9" stroke="#fff000" stroke-width="1.4"/><path d="M610.1 150.4V146.3H606.0z" fill="#fff000"/><path d="M632.3 178.1L635.1 175.3" stroke="#fff000" stroke-width="1.4"/><path d="M636.7 177.8V173.7H632.6z" fill="#fff000"/><path d="M679.9 182.1L682.7 179.3" stroke="#fff000" stroke-width="1.4"/><path d="M684.3 181.8V177.7H680.2z" fill="#fff000"/><path d="M694.3 186.6L697.1 183.8" stroke="#fff000" stroke-width="1.4"/><path d="M698.7 186.3V182.2H694.6z" fill="#fff000"/><path d="M701.9 180.1L704.7 177.3" stroke="#fff000" stroke-width="1.4"/><path d="M706.3 179.8V175.7H702.2z" fill="#fff000"/><path d="M224.0 166.5V169.6" stroke="#00ee10" stroke-width="1.7"/><path d="M221.2 168.7H226.8L224.0 172.7z" fill="#00ee10"/><path d="M297.5 204.3V207.4" stroke="#00ee10" stroke-width="1.7"/><path d="M294.7 206.5H300.3L297.5 210.5z" fill="#00ee10"/><path d="M325.8 184.6V187.7" stroke="#00ee10" stroke-width="1.7"/><path d="M323.0 186.8H328.6L325.8 190.8z" fill="#00ee10"/><path d="M367.4 173.9V177.0" stroke="#00ee10" stroke-width="1.7"/><path d="M364.6 176.1H370.2L367.4 180.1z" fill="#00ee10"/><path d="M504.3 150.5V153.6" stroke="#00ee10" stroke-width="1.7"/><path d="M501.5 152.7H507.1L504.3 156.7z" fill="#00ee10"/><path d="M616.0 109.6V112.7" stroke="#00ee10" stroke-width="1.7"/><path d="M613.2 111.8H618.8L616.0 115.8z" fill="#00ee10"/><path d="M659.7 80.9V84.0" stroke="#00ee10" stroke-width="1.7"/><path d="M656.9 83.1H662.5L659.7 87.1z" fill="#00ee10"/><path d="M212.6 221.8V218.7" stroke="#00ee10" stroke-width="1.7"/><path d="M209.8 219.6H215.4L212.6 215.6z" fill="#00ee10"/><path d="M262.5 293.5V290.4" stroke="#00ee10" stroke-width="1.7"/><path d="M259.7 291.3H265.3L262.5 287.3z" fill="#00ee10"/><path d="M308.9 281.1V278.0" stroke="#00ee10" stroke-width="1.7"/><path d="M306.1 278.9H311.7L308.9 274.9z" fill="#00ee10"/><path d="M342.0 235.1V232.0" stroke="#00ee10" stroke-width="1.7"/><path d="M339.2 232.9H344.8L342.0 228.9z" fill="#00ee10"/><path d="M410.8 299.1V296.0" stroke="#00ee10" stroke-width="1.7"/><path d="M408.0 296.9H413.6L410.8 292.9z" fill="#00ee10"/><path d="M519.4 212.5V209.4" stroke="#00ee10" stroke-width="1.7"/><path d="M516.6 210.3H522.2L519.4 206.3z" fill="#00ee10"/><path d="M632.3 196.1V193.0" stroke="#00ee10" stroke-width="1.7"/><path d="M629.5 193.9H635.1L632.3 189.9z" fill="#00ee10"/><path d="M694.3 199.1V196.0" stroke="#00ee10" stroke-width="1.7"/><path d="M691.5 196.9H697.1L694.3 192.9z" fill="#00ee10"/><path d="M705.6 56h3.8l-1.9 2.2z" fill="#ff9a1e"/><path d="M101.2 351.6l2.6 2.6h-2.6z" fill="#ff9a1e"/><path d="M101 331.2H705.6" stroke="#56765e" stroke-width="0.7"/><path d="M100.9 338.8 L103.8 340.3 L108.1 346.0 L112.4 344.6 L116.7 342.6 L121.0 338.8 L123.9 337.4 L126.8 340.3 L131.1 346.0 L135.4 343.7 L139.7 340.3 L142.6 338.0 L145.4 338.8 L149.8 335.9 L154.4 330.2 L158.4 327.9 L161.3 327.9 L165.6 325.3 L169.9 327.3 L174.2 331.1 L177.1 337.4 L179.9 341.7 L184.3 338.8 L188.6 336.5 L192.9 338.8 L197.2 342.3 L201.5 344.6 L205.8 346.6 L210.1 343.1 L214.4 334.5 L218.8 328.8 L223.1 328.8 L225.9 331.6 L230.3 340.3 L234.6 347.4 L238.9 351.2 L243.2 350.9 L247.5 349.7 L251.8 346.0 L256.1 342.6 L259.0 340.3 L263.3 333.1 L267.6 327.3 L272.0 320.1 L276.3 315.8 L279.1 315.8 L283.5 321.6 L287.8 325.9 L292.1 326.5 L295.8 330.2 L299.3 340.3 L302.7 343.7 L306.5 337.4 L310.8 330.2 L315.1 321.6 L319.4 317.3 L320.0 317.8 L323.5 318.7 L327.2 323.0 L331.5 328.8 L334.4 331.6 L337.3 333.9 L340.1 332.2 L343.0 328.8 L347.3 323.6 L351.6 324.4 L355.9 326.5 L360.3 327.9 L364.6 328.8 L367.7 332.2 L371.8 341.7 L376.1 348.3 L380.4 351.2 L384.7 350.3 L389.0 344.6 L393.3 335.9 L396.2 330.2 L399.1 325.9 L401.9 327.3 L405.7 332.2 L409.1 335.9 L413.4 338.8 L417.8 335.9 L422.6 330.2 L426.4 326.5 L430.7 326.5 L435.0 321.6 L439.3 319.6 L443.6 315.8 L447.9 317.3 L452.3 318.7 L456.6 321.6 L460.9 320.7 L465.2 324.4 L468.1 327.3 L472.4 324.4 L476.7 323.0 L481.0 325.9 L485.3 328.2 L489.6 321.6 L492.5 316.7 L496.8 315.8 L501.1 320.1 L504.0 325.9 L507.5 331.1 L511.2 337.4 L514.9 339.7 L518.4 336.8 L522.7 330.2 L527.0 325.9 L531.3 324.4 L535.6 325.3 L540.0 321.6 L540.0 322.7 L543.2 323.4 L548.1 317.9 L553.0 321.1 L557.9 326.0 L562.7 323.4 L567.6 327.6 L572.5 328.6 L577.4 329.9 L579.3 332.5 L582.2 334.1 L586.1 330.9 L590.4 322.7 L593.6 320.1 L598.5 323.4 L603.4 327.6 L608.2 326.6 L613.1 326.0 L617.3 331.8 L621.2 342.2 L624.5 345.5 L629.4 339.0 L634.2 330.9 L639.1 321.1 L644.0 313.0 L646.6 311.4 L652.1 314.6 L657.0 322.7 L662.5 331.8 L666.7 345.5 L670.0 350.4 L673.9 350.4 L678.1 345.5 L683.0 340.6 L687.9 341.6 L692.7 337.4 L697.6 333.5 L702.5 334.1 L705.7 335.7" fill="none" stroke="#c9760c" stroke-width="0.8" stroke-linejoin="round"/><path d="M154.4 306.4V331.2" stroke="#12a5ee" stroke-width="1.3"/><path d="M217.3 306.4V331.2" stroke="#12a5ee" stroke-width="1.3"/><path d="M265.6 306.4V331.2" stroke="#12a5ee" stroke-width="1.3"/><path d="M310.8 306.4V331.2" stroke="#12a5ee" stroke-width="1.3"/><path d="M342.4 306.4V331.2" stroke="#12a5ee" stroke-width="1.3"/><path d="M395.9 306.4V331.2" stroke="#12a5ee" stroke-width="1.3"/><path d="M422.6 306.4V331.2" stroke="#12a5ee" stroke-width="1.3"/><path d="M522.7 306.4V331.2" stroke="#12a5ee" stroke-width="1.3"/><path d="M586.1 306.4V331.2" stroke="#12a5ee" stroke-width="1.3"/><path d="M634.2 306.4V331.2" stroke="#12a5ee" stroke-width="1.3"/><path d="M174.2 331.2V347.6" stroke="#f11fe0" stroke-width="1.3"/><path d="M226 331.2V347.6" stroke="#f11fe0" stroke-width="1.3"/><path d="M295.8 331.2V347.6" stroke="#f11fe0" stroke-width="1.3"/><path d="M334.4 331.2V347.6" stroke="#f11fe0" stroke-width="1.3"/><path d="M367.7 331.2V347.6" stroke="#f11fe0" stroke-width="1.3"/><path d="M405.7 331.2V347.6" stroke="#f11fe0" stroke-width="1.3"/><path d="M507.5 331.2V347.6" stroke="#f11fe0" stroke-width="1.3"/><path d="M579.3 331.2V347.6" stroke="#f11fe0" stroke-width="1.3"/><path d="M617.3 331.2V347.6" stroke="#f11fe0" stroke-width="1.3"/><path d="M662.5 331.2V347.6" stroke="#f11fe0" stroke-width="1.3"/><path d="M775.8 67.8h1.4" stroke="#c8c8c8" stroke-width="0.5"/><path d="M775.8 81.6h1.4" stroke="#c8c8c8" stroke-width="0.5"/><path d="M775.8 95.4h1.4" stroke="#c8c8c8" stroke-width="0.5"/><path d="M775.8 109.2h1.4" stroke="#c8c8c8" stroke-width="0.5"/><path d="M775.8 123.0h1.4" stroke="#c8c8c8" stroke-width="0.5"/><path d="M775.8 136.8h1.4" stroke="#c8c8c8" stroke-width="0.5"/><path d="M775.8 150.5h1.4" stroke="#c8c8c8" stroke-width="0.5"/><path d="M775.8 164.3h1.4" stroke="#c8c8c8" stroke-width="0.5"/><path d="M775.8 178.1h1.4" stroke="#c8c8c8" stroke-width="0.5"/><path d="M775.8 191.9h1.4" stroke="#c8c8c8" stroke-width="0.5"/><path d="M775.8 205.7h1.4" stroke="#c8c8c8" stroke-width="0.5"/><path d="M775.8 219.5h1.4" stroke="#c8c8c8" stroke-width="0.5"/><path d="M775.8 233.3h1.4" stroke="#c8c8c8" stroke-width="0.5"/><path d="M775.8 247.1h1.4" stroke="#c8c8c8" stroke-width="0.5"/><path d="M775.8 260.9h1.4" stroke="#c8c8c8" stroke-width="0.5"/><path d="M775.8 274.6h1.4" stroke="#c8c8c8" stroke-width="0.5"/><path d="M775.8 288.4h1.4" stroke="#c8c8c8" stroke-width="0.5"/><path d="M775.8 302.2h1.4" stroke="#c8c8c8" stroke-width="0.5"/><path d="M101.2 354.6v1.6" stroke="#c8c8c8" stroke-width="0.5"/><path d="M127.9 354.6v1.6" stroke="#c8c8c8" stroke-width="0.5"/><path d="M154.6 354.6v1.6" stroke="#c8c8c8" stroke-width="0.5"/><path d="M181.2 354.6v1.6" stroke="#c8c8c8" stroke-width="0.5"/><path d="M207.9 354.6v1.6" stroke="#c8c8c8" stroke-width="0.5"/><path d="M234.6 354.6v1.6" stroke="#c8c8c8" stroke-width="0.5"/><path d="M261.3 354.6v1.6" stroke="#c8c8c8" stroke-width="0.5"/><path d="M288.0 354.6v1.6" stroke="#c8c8c8" stroke-width="0.5"/><path d="M314.6 354.6v1.6" stroke="#c8c8c8" stroke-width="0.5"/><path d="M341.3 354.6v1.6" stroke="#c8c8c8" stroke-width="0.5"/><path d="M368.0 354.6v1.6" stroke="#c8c8c8" stroke-width="0.5"/><path d="M394.7 354.6v1.6" stroke="#c8c8c8" stroke-width="0.5"/><path d="M421.4 354.6v1.6" stroke="#c8c8c8" stroke-width="0.5"/><path d="M448.0 354.6v1.6" stroke="#c8c8c8" stroke-width="0.5"/><path d="M474.7 354.6v1.6" stroke="#c8c8c8" stroke-width="0.5"/><path d="M501.4 354.6v1.6" stroke="#c8c8c8" stroke-width="0.5"/><path d="M528.1 354.6v1.6" stroke="#c8c8c8" stroke-width="0.5"/><path d="M554.8 354.6v1.6" stroke="#c8c8c8" stroke-width="0.5"/><path d="M581.4 354.6v1.6" stroke="#c8c8c8" stroke-width="0.5"/><path d="M608.1 354.6v1.6" stroke="#c8c8c8" stroke-width="0.5"/><path d="M634.8 354.6v1.6" stroke="#c8c8c8" stroke-width="0.5"/><path d="M661.5 354.6v1.6" stroke="#c8c8c8" stroke-width="0.5"/><path d="M688.2 354.6v1.6" stroke="#c8c8c8" stroke-width="0.5"/><path d="M775.8 306.2h1.4" stroke="#c8c8c8" stroke-width="0.5"/><path d="M775.8 331.4h1.4" stroke="#c8c8c8" stroke-width="0.5"/><path d="M775.8 351h1.4" stroke="#c8c8c8" stroke-width="0.5"/><circle cx="771" cy="60.1" r="2.3" fill="none" stroke="#e8e8e8" stroke-width="0.5"/><path d="M769.9 60.7c0.6 0.9 1.6 0.9 2.2 0" stroke="#e8e8e8" stroke-width="0.4" fill="none"/><path d="M770.2 59.3h0.1M771.8 59.3h0.1" stroke="#e8e8e8" stroke-width="0.5" stroke-linecap="round"/><path d="M102.2 58.4h2.6l-1.3 1.7z" fill="#fff"/></svg>
<div style="position:absolute;left:107.4px;top:56.8px;font-size:4.1px;line-height:5.1px;color:#ffffff;white-space:nowrap;">AUDCAD,M2</div>
<div style="position:absolute;left:731.6px;top:57.7px;font-size:4.0px;line-height:5.0px;color:#ffffff;white-space:nowrap;">Trade Assistant MT4</div>
<div style="position:absolute;left:778.2px;top:65.8px;font-size:3.7px;line-height:4.7px;color:#ffffff;white-space:nowrap;-webkit-text-stroke:0.12px #fff;">0.90550</div>
<div style="position:absolute;left:778.2px;top:79.5px;font-size:3.7px;line-height:4.7px;color:#ffffff;white-space:nowrap;-webkit-text-stroke:0.12px #fff;">0.90355</div>
<div style="position:absolute;left:778.2px;top:93.3px;font-size:3.7px;line-height:4.7px;color:#ffffff;white-space:nowrap;-webkit-text-stroke:0.12px #fff;">0.90165</div>
<div style="position:absolute;left:778.2px;top:107.1px;font-size:3.7px;line-height:4.7px;color:#ffffff;white-space:nowrap;-webkit-text-stroke:0.12px #fff;">0.89975</div>
<div style="position:absolute;left:778.2px;top:120.9px;font-size:3.7px;line-height:4.7px;color:#ffffff;white-space:nowrap;-webkit-text-stroke:0.12px #fff;">0.89780</div>
<div style="position:absolute;left:778.2px;top:134.7px;font-size:3.7px;line-height:4.7px;color:#ffffff;white-space:nowrap;-webkit-text-stroke:0.12px #fff;">0.89590</div>
<div style="position:absolute;left:778.2px;top:148.5px;font-size:3.7px;line-height:4.7px;color:#ffffff;white-space:nowrap;-webkit-text-stroke:0.12px #fff;">0.89395</div>
<div style="position:absolute;left:778.2px;top:176.1px;font-size:3.7px;line-height:4.7px;color:#ffffff;white-space:nowrap;-webkit-text-stroke:0.12px #fff;">0.89015</div>
<div style="position:absolute;left:778.2px;top:189.9px;font-size:3.7px;line-height:4.7px;color:#ffffff;white-space:nowrap;-webkit-text-stroke:0.12px #fff;">0.88820</div>
<div style="position:absolute;left:778.2px;top:203.7px;font-size:3.7px;line-height:4.7px;color:#ffffff;white-space:nowrap;-webkit-text-stroke:0.12px #fff;">0.88630</div>
<div style="position:absolute;left:778.2px;top:217.4px;font-size:3.7px;line-height:4.7px;color:#ffffff;white-space:nowrap;-webkit-text-stroke:0.12px #fff;">0.88435</div>
<div style="position:absolute;left:778.2px;top:231.2px;font-size:3.7px;line-height:4.7px;color:#ffffff;white-space:nowrap;-webkit-text-stroke:0.12px #fff;">0.88245</div>
<div style="position:absolute;left:778.2px;top:245.0px;font-size:3.7px;line-height:4.7px;color:#ffffff;white-space:nowrap;-webkit-text-stroke:0.12px #fff;">0.88050</div>
<div style="position:absolute;left:778.2px;top:258.8px;font-size:3.7px;line-height:4.7px;color:#ffffff;white-space:nowrap;-webkit-text-stroke:0.12px #fff;">0.87860</div>
<div style="position:absolute;left:778.2px;top:272.6px;font-size:3.7px;line-height:4.7px;color:#ffffff;white-space:nowrap;-webkit-text-stroke:0.12px #fff;">0.87670</div>
<div style="position:absolute;left:778.2px;top:286.4px;font-size:3.7px;line-height:4.7px;color:#ffffff;white-space:nowrap;-webkit-text-stroke:0.12px #fff;">0.87475</div>
<div style="position:absolute;left:778.2px;top:300.2px;font-size:3.7px;line-height:4.7px;color:#ffffff;white-space:nowrap;-webkit-text-stroke:0.12px #fff;">0.87285</div>
<div style="position:absolute;left:776.6px;top:164.2px;width:16.8px;height:4.4px;background:#ffffff;"></div>
<div style="position:absolute;left:778.2px;top:164.2px;font-size:3.7px;line-height:4.7px;color:#000;white-space:nowrap;">0.89172</div>
<div style="position:absolute;left:777.4px;top:304.6px;font-size:3.7px;line-height:4.7px;color:#ffffff;white-space:nowrap;-webkit-text-stroke:0.12px #fff;">3.2769</div>
<div style="position:absolute;left:777.8px;top:329.1px;font-size:3.7px;line-height:4.7px;color:#ffffff;white-space:nowrap;-webkit-text-stroke:0.12px #fff;">0.00</div>
<div style="position:absolute;left:777.4px;top:349.1px;font-size:3.7px;line-height:4.7px;color:#ffffff;white-space:nowrap;-webkit-text-stroke:0.12px #fff;">-2.8138</div>
<div style="position:absolute;left:101.0px;top:356.1px;font-size:4.0px;line-height:5.0px;color:#ffffff;white-space:nowrap;-webkit-text-stroke:0.12px #fff;transform:scaleX(0.93);transform-origin:0 50%;">20 Jun 2022</div>
<div style="position:absolute;left:127.7px;top:356.1px;font-size:4.0px;line-height:5.0px;color:#ffffff;white-space:nowrap;-webkit-text-stroke:0.12px #fff;transform:scaleX(0.93);transform-origin:0 50%;">21 Jun 17:00</div>
<div style="position:absolute;left:154.4px;top:356.1px;font-size:4.0px;line-height:5.0px;color:#ffffff;white-space:nowrap;-webkit-text-stroke:0.12px #fff;transform:scaleX(0.93);transform-origin:0 50%;">23 Jun 15:00</div>
<div style="position:absolute;left:181.0px;top:356.1px;font-size:4.0px;line-height:5.0px;color:#ffffff;white-space:nowrap;-webkit-text-stroke:0.12px #fff;transform:scaleX(0.93);transform-origin:0 50%;">27 Jun 03:00</div>
<div style="position:absolute;left:207.7px;top:356.1px;font-size:4.0px;line-height:5.0px;color:#ffffff;white-space:nowrap;-webkit-text-stroke:0.12px #fff;transform:scaleX(0.93);transform-origin:0 50%;">29 Jun 08:00</div>
<div style="position:absolute;left:234.4px;top:356.1px;font-size:4.0px;line-height:5.0px;color:#ffffff;white-space:nowrap;-webkit-text-stroke:0.12px #fff;transform:scaleX(0.93);transform-origin:0 50%;">1 Jul 01:00</div>
<div style="position:absolute;left:261.1px;top:356.1px;font-size:4.0px;line-height:5.0px;color:#ffffff;white-space:nowrap;-webkit-text-stroke:0.12px #fff;transform:scaleX(0.93);transform-origin:0 50%;">1 Jul 17:00</div>
<div style="position:absolute;left:287.8px;top:356.1px;font-size:4.0px;line-height:5.0px;color:#ffffff;white-space:nowrap;-webkit-text-stroke:0.12px #fff;transform:scaleX(0.93);transform-origin:0 50%;">4 Jul 21:00</div>
<div style="position:absolute;left:314.4px;top:356.1px;font-size:4.0px;line-height:5.0px;color:#ffffff;white-space:nowrap;-webkit-text-stroke:0.12px #fff;transform:scaleX(0.93);transform-origin:0 50%;">5 Jul 15:00</div>
<div style="position:absolute;left:341.1px;top:356.1px;font-size:4.0px;line-height:5.0px;color:#ffffff;white-space:nowrap;-webkit-text-stroke:0.12px #fff;transform:scaleX(0.93);transform-origin:0 50%;">6 Jul 22:00</div>
<div style="position:absolute;left:367.8px;top:356.1px;font-size:4.0px;line-height:5.0px;color:#ffffff;white-space:nowrap;-webkit-text-stroke:0.12px #fff;transform:scaleX(0.93);transform-origin:0 50%;">8 Jul 17:00</div>
<div style="position:absolute;left:394.5px;top:356.1px;font-size:4.0px;line-height:5.0px;color:#ffffff;white-space:nowrap;-webkit-text-stroke:0.12px #fff;transform:scaleX(0.93);transform-origin:0 50%;">12 Jul 04:00</div>
<div style="position:absolute;left:421.2px;top:356.1px;font-size:4.0px;line-height:5.0px;color:#ffffff;white-space:nowrap;-webkit-text-stroke:0.12px #fff;transform:scaleX(0.93);transform-origin:0 50%;">13 Jul 17:00</div>
<div style="position:absolute;left:447.8px;top:356.1px;font-size:4.0px;line-height:5.0px;color:#ffffff;white-space:nowrap;-webkit-text-stroke:0.12px #fff;transform:scaleX(0.93);transform-origin:0 50%;">14 Jul 10:00</div>
<div style="position:absolute;left:474.5px;top:356.1px;font-size:4.0px;line-height:5.0px;color:#ffffff;white-space:nowrap;-webkit-text-stroke:0.12px #fff;transform:scaleX(0.93);transform-origin:0 50%;">15 Jul 17:00</div>
<div style="position:absolute;left:501.2px;top:356.1px;font-size:4.0px;line-height:5.0px;color:#ffffff;white-space:nowrap;-webkit-text-stroke:0.12px #fff;transform:scaleX(0.93);transform-origin:0 50%;">19 Jul 11:00</div>
<div style="position:absolute;left:527.9px;top:356.1px;font-size:4.0px;line-height:5.0px;color:#ffffff;white-space:nowrap;-webkit-text-stroke:0.12px #fff;transform:scaleX(0.93);transform-origin:0 50%;">21 Jul 16:00</div>
<div style="position:absolute;left:554.6px;top:356.1px;font-size:4.0px;line-height:5.0px;color:#ffffff;white-space:nowrap;-webkit-text-stroke:0.12px #fff;transform:scaleX(0.93);transform-origin:0 50%;">22 Jul 16:00</div>
<div style="position:absolute;left:581.2px;top:356.1px;font-size:4.0px;line-height:5.0px;color:#ffffff;white-space:nowrap;-webkit-text-stroke:0.12px #fff;transform:scaleX(0.93);transform-origin:0 50%;">26 Jul 20:00</div>
<div style="position:absolute;left:607.9px;top:356.1px;font-size:4.0px;line-height:5.0px;color:#ffffff;white-space:nowrap;-webkit-text-stroke:0.12px #fff;transform:scaleX(0.93);transform-origin:0 50%;">28 Jul 15:00</div>
<div style="position:absolute;left:634.6px;top:356.1px;font-size:4.0px;line-height:5.0px;color:#ffffff;white-space:nowrap;-webkit-text-stroke:0.12px #fff;transform:scaleX(0.93);transform-origin:0 50%;">29 Jul 17:00</div>
<div style="position:absolute;left:661.3px;top:356.1px;font-size:4.0px;line-height:5.0px;color:#ffffff;white-space:nowrap;-webkit-text-stroke:0.12px #fff;transform:scaleX(0.93);transform-origin:0 50%;">2 Aug 02:00</div>
<div style="position:absolute;left:688.0px;top:356.1px;font-size:4.0px;line-height:5.0px;color:#ffffff;white-space:nowrap;-webkit-text-stroke:0.12px #fff;transform:scaleX(0.93);transform-origin:0 50%;">2 Aug 19:00</div>
<div style="position:absolute;left:102.6px;top:305.4px;font-size:3.9px;line-height:4.9px;color:#f2f2f2;white-space:nowrap;">forex sweep(mod) 0.0000 -0.6781 -0.6781 0.0000 0.0000</div>
<div style="position:absolute;left:106.2px;top:292.1px;font-size:5.3px;line-height:6.3px;color:#858585;white-space:nowrap;font-family:&quot;Liberation Serif&quot;,serif;transform:scaleX(0.87);transform-origin:0 50%;">&Oacute;&ntilde;&ograve;&agrave;&euml; &egrave;&ntilde;&ecirc;&agrave;&ograve;&uuml;&ndash;&egrave;&auml; FXSA.ORG</div>
<div style="position:absolute;left:476.2px;top:73.2px;width:28.4px;height:7.6px;background:#5e5e5e;border:0.6px solid #7c7c7c;"></div>
<div style="position:absolute;left:482.6px;top:74.0px;font-size:5.0px;line-height:6.0px;color:#1fc51f;white-space:nowrap;">arrows</div>
<div style="position:absolute;left:652.3px;top:258.5px;font-size:5.4px;line-height:6.4px;color:#0a6e0a;white-space:nowrap;transform:scaleX(0.925);transform-origin:0 50%;">0d 06:06:26</div>
<div style="position:absolute;left:682.9px;top:258.5px;font-size:5.4px;line-height:6.4px;color:#0a6e0a;white-space:nowrap;transform:scaleX(0.915);transform-origin:0 50%;">AUD: Trade Balance</div>
<div style="position:absolute;left:652.3px;top:265.6px;font-size:5.4px;line-height:6.4px;color:#0a6e0a;white-space:nowrap;transform:scaleX(0.925);transform-origin:0 50%;">0d 17:06:26</div>
<div style="position:absolute;left:682.9px;top:265.6px;font-size:5.4px;line-height:6.4px;color:#0a6e0a;white-space:nowrap;transform:scaleX(0.915);transform-origin:0 50%;">CAD: Building Permits m/m</div>
<div style="position:absolute;left:652.3px;top:272.6px;font-size:5.4px;line-height:6.4px;color:#0a6e0a;white-space:nowrap;transform:scaleX(0.925);transform-origin:0 50%;">0d 17:06:26</div>
<div style="position:absolute;left:682.9px;top:272.6px;font-size:5.4px;line-height:6.4px;color:#0a6e0a;white-space:nowrap;transform:scaleX(0.915);transform-origin:0 50%;">CAD: Trade Balance</div>
<div style="position:absolute;left:652.3px;top:279.6px;font-size:5.4px;line-height:6.4px;color:#0c8a0c;white-space:nowrap;transform:scaleX(0.925);transform-origin:0 50%;">1d 03:06:26</div>
<div style="position:absolute;left:682.9px;top:279.6px;font-size:5.4px;line-height:6.4px;color:#0c8a0c;white-space:nowrap;transform:scaleX(0.915);transform-origin:0 50%;">AUD: AIG Services Index</div>
<div style="position:absolute;left:652.3px;top:286.7px;font-size:5.4px;line-height:6.4px;color:#e00000;white-space:nowrap;transform:scaleX(0.925);transform-origin:0 50%;">1d 06:06:26</div>
<div style="position:absolute;left:682.9px;top:286.7px;font-size:5.4px;line-height:6.4px;color:#e00000;white-space:nowrap;transform:scaleX(0.915);transform-origin:0 50%;">AUD: RBA Monetary Policy Statement</div>
<div style="position:absolute;left:652.3px;top:293.8px;font-size:5.4px;line-height:6.4px;color:#e00000;white-space:nowrap;transform:scaleX(0.925);transform-origin:0 50%;">1d 17:06:26</div>
<div style="position:absolute;left:682.9px;top:293.8px;font-size:5.4px;line-height:6.4px;color:#e00000;white-space:nowrap;transform:scaleX(0.915);transform-origin:0 50%;">CAD: Employment Change</div>
<div style="position:absolute;left:107.2px;top:62.3px;width:85.0px;height:110.2px;background:#0d98a6;border:0.5px solid #19b3c2;"></div>
<div style="position:absolute;left:107.2px;top:62.3px;width:85.0px;height:7.5px;background:#00c2fa;"></div>
<div style="position:absolute;left:108.8px;top:63.0px;font-size:5.2px;line-height:6.2px;color:#10357a;white-space:nowrap;transform:scaleX(0.88);transform-origin:0 50%;">Trade Assistant MT4 9.5</div>
<div style="position:absolute;left:107.5px;top:70.3px;width:84.4px;height:4.4px;background:#0a8f9d;border:0.45px solid #a4dde4;"></div>
<div style="position:absolute;left:108.8px;top:69.7px;font-size:4.7px;line-height:5.7px;color:#f4fdff;white-space:nowrap;transform:scaleX(0.93);transform-origin:0 50%;">AUDCAD</div>
<div style="position:absolute;left:174.4px;top:69.5px;font-size:4.9px;line-height:5.9px;color:#ffffff;white-space:nowrap;transform:scaleX(0.9);transform-origin:0 50%;">01:23:35</div>
<svg width="200" height="180" viewBox="0 0 200 180"><rect x="170.2" y="64.4" width="4" height="3" rx="0.4" fill="none" stroke="#e8f8ff" stroke-width="0.6"/><rect x="171.4" y="63.6" width="1.6" height="0.9" fill="#e8f8ff"/><circle cx="172.2" cy="65.9" r="0.7" fill="#e8f8ff"/><path d="M186.4 64.6l2.4 2.8M188.8 64.6l-2.4 2.8" stroke="#e8f8ff" stroke-width="0.6"/><rect x="129.7" y="71" width="3.8" height="3" fill="none" stroke="#d8f4f8" stroke-width="0.4"/><rect x="134.8" y="71" width="4.0" height="3" fill="none" stroke="#d8f4f8" stroke-width="0.4"/><rect x="139.9" y="71" width="4.8" height="3" fill="none" stroke="#d8f4f8" stroke-width="0.4"/><path d="M132.3 71.7l-1.4 0.8 1.4 0.8zM136.1 71.7l1.4 0.8-1.4 0.8z" fill="#fff"/><rect x="141.1" y="71.7" width="2.4" height="1.6" fill="#fff"/><path d="M147.2 70.8v3.4" stroke="#d8f4f8" stroke-width="0.4"/><path d="M166.8 88.2c1.4-1.8 3-1.8 4.4 0-1.4 1.8-3 1.8-4.4 0z" fill="none" stroke="#e6f7fa" stroke-width="0.5"/><circle cx="169" cy="88.2" r="0.7" fill="#e6f7fa"/><rect x="176.6" y="86.8" width="3.4" height="3.2" rx="0.4" fill="none" stroke="#e6f7fa" stroke-width="0.5"/><path d="M177.4 86.2v1.2M179.2 86.2v1.2M176.6 88h3.4" stroke="#e6f7fa" stroke-width="0.4"/><path d="M185.4 89.6c0.8-0.4 0.4-3.2 1.8-3.2s1 2.8 1.8 3.2z" fill="none" stroke="#e6f7fa" stroke-width="0.5"/><path d="M186.6 90.2h1.2" stroke="#e6f7fa" stroke-width="0.5"/><path d="M107.8 92.2H191.6" stroke="#3fbac6" stroke-width="0.5"/><path d="M107.8 111.5H191.6" stroke="#3fbac6" stroke-width="0.5"/><path d="M107.8 145.2H191.6" stroke="#3fbac6" stroke-width="0.5"/><path d="M109.4 98v-2.2h20.8V98" fill="none" stroke="#3fbac6" stroke-width="0.4"/><path d="M136.9 130.6l0.7-0.9 0.7 0.9zM136.9 131.6l0.7 0.9 0.7-0.9z" fill="#8a8a8a"/><path d="M188.3 130.6l0.7-0.9 0.7 0.9zM188.3 131.6l0.7 0.9 0.7-0.9z" fill="#8a8a8a"/><path d="M136.9 139.4l0.7-0.9 0.7 0.9zM136.9 140.4l0.7 0.9 0.7-0.9z" fill="#8a8a8a"/><path d="M188.3 139.4l0.7-0.9 0.7 0.9zM188.3 140.4l0.7 0.9 0.7-0.9z" fill="#8a8a8a"/><path d="M116.89999999999999 105.3l0.7-0.9 0.7 0.9zM116.89999999999999 106.3l0.7 0.9 0.7-0.9z" fill="#8a8a8a"/><path d="M129.9 105.3l0.7-0.9 0.7 0.9zM129.9 106.3l0.7 0.9 0.7-0.9z" fill="#8a8a8a"/></svg>
<div style="position:absolute;left:108.5px;top:78.0px;width:20.6px;height:5.6px;background:#2a46c9;color:#fff;font-size:4.9px;line-height:4.9px;display:flex;align-items:center;justify-content:center;white-space:nowrap;"><span style="display:block;position:relative;top:0.45px;transform:scaleX(0.9);">Trade</span></div>
<div style="position:absolute;left:130.2px;top:78.0px;width:19.9px;height:5.6px;background:#0f99f4;color:#fff;font-size:4.9px;line-height:4.9px;display:flex;align-items:center;justify-content:center;white-space:nowrap;"><span style="display:block;position:relative;top:0.45px;transform:scaleX(0.9);">Close</span></div>
<div style="position:absolute;left:151.4px;top:78.0px;width:20.1px;height:5.6px;background:#0f99f4;color:#fff;font-size:4.9px;line-height:4.9px;display:flex;align-items:center;justify-content:center;white-space:nowrap;"><span style="display:block;position:relative;top:0.45px;transform:scaleX(0.9);">Settings</span></div>
<div style="position:absolute;left:172.8px;top:78.0px;width:17.7px;height:5.6px;background:#0f99f4;color:#fff;font-size:4.9px;line-height:4.9px;display:flex;align-items:center;justify-content:center;white-space:nowrap;"><span style="display:block;position:relative;top:0.45px;transform:scaleX(0.9);">Info</span></div>
<div style="position:absolute;left:110.0px;top:85.4px;font-size:4.7px;line-height:5.7px;color:#e6f7fa;white-space:nowrap;transform:scaleX(0.9);transform-origin:0 50%;">Sp: 8&nbsp; Com: 0.03</div>
<div style="position:absolute;left:116.2px;top:94.1px;width:7.4px;height:2.7px;background:#2a46c9;color:#d0d8ff;font-size:2.6px;line-height:2.6px;display:flex;align-items:center;justify-content:center;white-space:nowrap;"><span style="display:block;position:relative;top:0.45px;transform:scaleX(0.9);">pips</span></div>
<div style="position:absolute;left:108.8px;top:97.3px;font-size:5.0px;line-height:6.0px;color:#e6f7fa;white-space:nowrap;transform:scaleX(0.88);transform-origin:0 50%;">R/TP&nbsp;R/SL</div>
<div style="position:absolute;left:139.2px;top:97.4px;font-size:4.8px;line-height:5.8px;color:#e6f7fa;white-space:nowrap;transform:scaleX(0.9);transform-origin:0 50%;">Risk %Ba</div>
<div style="position:absolute;left:166.5px;top:95.8px;width:23.7px;height:5.8px;background:#2a46c9;color:#fff;font-size:4.9px;line-height:4.9px;display:flex;align-items:center;justify-content:center;white-space:nowrap;"><span style="display:block;position:relative;top:0.45px;transform:scaleX(0.9);">Lot calc</span></div>
<div style="position:absolute;left:166.5px;top:103.2px;width:23.7px;height:5.2px;background:#0f99f4;color:#fff;font-size:4.9px;line-height:4.9px;display:flex;align-items:center;justify-content:center;white-space:nowrap;"><span style="display:block;position:relative;top:0.45px;transform:scaleX(0.9);">Lines</span></div>
<div style="position:absolute;left:108.4px;top:103.2px;width:10.4px;height:5.2px;background:#fff;color:#111;font-size:4.6px;line-height:4.6px;display:flex;align-items:center;justify-content:center;white-space:nowrap;border:0.5px solid #9a9a9a;justify-content:flex-start;padding-left:0.6px;"><span style="display:block;position:relative;top:0.45px;transform:scaleX(0.9);">2.0</span></div>
<div style="position:absolute;left:121.1px;top:103.2px;width:10.7px;height:5.2px;background:#fff;color:#111;font-size:4.6px;line-height:4.6px;display:flex;align-items:center;justify-content:center;white-space:nowrap;border:0.5px solid #9a9a9a;justify-content:flex-start;padding-left:1.2px;"><span style="display:block;position:relative;top:0.45px;transform:scaleX(0.9);">1.0</span></div>
<div style="position:absolute;left:134.0px;top:103.2px;width:4.0px;height:5.2px;background:#0f99f4;color:#fff;font-size:4.9px;line-height:4.9px;display:flex;align-items:center;justify-content:center;white-space:nowrap;"><span style="display:block;position:relative;top:0.45px;transform:scaleX(0.9);">-</span></div>
<div style="position:absolute;left:138.8px;top:103.2px;width:21.5px;height:5.2px;background:#fff;color:#111;font-size:4.6px;line-height:4.6px;display:flex;align-items:center;justify-content:center;white-space:nowrap;border:0.5px solid #9a9a9a;"><span style="display:block;position:relative;top:0.45px;transform:scaleX(0.9);">0.00</span></div>
<div style="position:absolute;left:160.8px;top:103.2px;width:3.6px;height:5.2px;background:#0f99f4;color:#fff;font-size:4.2px;line-height:4.2px;display:flex;align-items:center;justify-content:center;white-space:nowrap;"><span style="display:block;position:relative;top:0.45px;transform:scaleX(0.9);">x</span></div>
<div style="position:absolute;left:110.0px;top:113.3px;font-size:4.8px;line-height:5.8px;color:#e6f7fa;white-space:nowrap;transform:scaleX(0.86);transform-origin:0 50%;">Comment</div>
<div style="position:absolute;left:108.4px;top:120.0px;width:81.9px;height:4.8px;background:#fff;color:#111;font-size:4.4px;line-height:4.4px;display:flex;align-items:center;justify-content:center;white-space:nowrap;border:0.5px solid #9a9a9a;"><span style="display:block;position:relative;top:0.45px;transform:scaleX(0.9);">Comment</span></div>
<div style="position:absolute;left:108.4px;top:128.3px;width:30.5px;height:5.7px;background:#c9c9c9;color:#111;font-size:4.8px;line-height:4.8px;display:flex;align-items:center;justify-content:center;white-space:nowrap;border:0.5px solid #9a9a9a;"><span style="display:block;position:relative;top:0.45px;transform:scaleX(0.9);">0.01</span></div>
<div style="position:absolute;left:109.4px;top:128.6px;font-size:4.2px;line-height:5.2px;color:#e9e9e9;white-space:nowrap;">Lot</div>
<div style="position:absolute;left:143.4px;top:128.4px;font-size:4.8px;line-height:5.8px;color:#e6f7fa;white-space:nowrap;">Entry:</div>
<div style="position:absolute;left:159.8px;top:128.3px;width:30.5px;height:5.7px;background:#fff;color:#333;font-size:4.8px;line-height:4.8px;display:flex;align-items:center;justify-content:center;white-space:nowrap;border:0.5px solid #9a9a9a;justify-content:flex-end;padding-right:10.6px;"><span style="display:block;position:relative;top:0.45px;transform:scaleX(0.9);">200</span></div>
<div style="position:absolute;left:108.4px;top:137.1px;width:30.5px;height:5.6px;background:#fff;color:#333;font-size:4.8px;line-height:4.8px;display:flex;align-items:center;justify-content:center;white-space:nowrap;border:0.5px solid #9a9a9a;"><span style="display:block;position:relative;top:0.45px;transform:scaleX(0.9);">400</span></div>
<div style="position:absolute;left:109.2px;top:137.4px;font-size:4.0px;line-height:5.0px;color:#9a9a9a;white-space:nowrap;">tp</div>
<div style="position:absolute;left:141.0px;top:137.1px;width:16.1px;height:5.6px;background:#0f99f4;color:#fff;font-size:4.9px;line-height:4.9px;display:flex;align-items:center;justify-content:center;white-space:nowrap;"><span style="display:block;position:relative;top:0.45px;transform:scaleX(0.9);">Price</span></div>
<div style="position:absolute;left:159.8px;top:137.1px;width:30.5px;height:5.6px;background:#fff;color:#333;font-size:4.8px;line-height:4.8px;display:flex;align-items:center;justify-content:center;white-space:nowrap;border:0.5px solid #9a9a9a;justify-content:flex-end;padding-right:10.6px;"><span style="display:block;position:relative;top:0.45px;transform:scaleX(0.9);">200</span></div>
<div style="position:absolute;left:160.8px;top:137.4px;font-size:4.0px;line-height:5.0px;color:#9a9a9a;white-space:nowrap;">sl</div>
<div style="position:absolute;left:108.4px;top:147.9px;width:35.5px;height:6.6px;background:#e8475f;color:#fff;font-size:4.9px;line-height:4.9px;display:flex;align-items:center;justify-content:center;white-space:nowrap;border:0.5px solid #b8323f;"><span style="display:block;position:relative;top:0.45px;transform:scaleX(0.9);">Sell</span></div>
<div style="position:absolute;left:146.5px;top:148.3px;width:5.6px;height:5.3px;background:#1e98f4;color:#fff;font-size:4px;line-height:4px;display:flex;align-items:center;justify-content:center;white-space:nowrap;border:0.4px solid #2a7fd6;"><span style="display:block;position:relative;top:0.45px;transform:scaleX(0.9);"></span></div>
<div style="position:absolute;left:154.8px;top:147.9px;width:35.5px;height:6.6px;background:#0a9a1c;color:#e8ffe8;font-size:4.9px;line-height:4.9px;display:flex;align-items:center;justify-content:center;white-space:nowrap;border:0.5px solid #067012;"><span style="display:block;position:relative;top:0.45px;transform:scaleX(0.9);">Buy</span></div>
<div style="position:absolute;left:108.4px;top:156.2px;width:40.4px;height:6.6px;background:#e8475f;color:#fff;font-size:4.9px;line-height:4.9px;display:flex;align-items:center;justify-content:center;white-space:nowrap;border:0.5px solid #b8323f;"><span style="display:block;position:relative;top:0.45px;transform:scaleX(0.9);">Sell Stop</span></div>
<div style="position:absolute;left:149.8px;top:156.2px;width:40.5px;height:6.6px;background:#0a9a1c;color:#e8ffe8;font-size:4.9px;line-height:4.9px;display:flex;align-items:center;justify-content:center;white-space:nowrap;border:0.5px solid #067012;"><span style="display:block;position:relative;top:0.45px;transform:scaleX(0.9);">Buy Stop</span></div>
<div style="position:absolute;left:108.4px;top:164.3px;width:40.4px;height:6.6px;background:#e8475f;color:#fff;font-size:4.9px;line-height:4.9px;display:flex;align-items:center;justify-content:center;white-space:nowrap;border:0.5px solid #b8323f;"><span style="display:block;position:relative;top:0.45px;transform:scaleX(0.9);">Sell Limit</span></div>
<div style="position:absolute;left:149.8px;top:164.3px;width:40.5px;height:6.6px;background:#0a9a1c;color:#e8ffe8;font-size:4.9px;line-height:4.9px;display:flex;align-items:center;justify-content:center;white-space:nowrap;border:0.5px solid #067012;"><span style="display:block;position:relative;top:0.45px;transform:scaleX(0.9);">Buy Limit</span></div>
<svg width="200" height="180" viewBox="0 0 200 180"><path d="M136.9 130.6l0.7-0.9 0.7 0.9zM136.9 131.6l0.7 0.9 0.7-0.9z" fill="#8a8a8a"/><path d="M188.3 130.6l0.7-0.9 0.7 0.9zM188.3 131.6l0.7 0.9 0.7-0.9z" fill="#8a8a8a"/><path d="M136.9 139.4l0.7-0.9 0.7 0.9zM136.9 140.4l0.7 0.9 0.7-0.9z" fill="#8a8a8a"/><path d="M188.3 139.4l0.7-0.9 0.7 0.9zM188.3 140.4l0.7 0.9 0.7-0.9z" fill="#8a8a8a"/><path d="M116.89999999999999 105.3l0.7-0.9 0.7 0.9zM116.89999999999999 106.3l0.7 0.9 0.7-0.9z" fill="#8a8a8a"/><path d="M129.9 105.3l0.7-0.9 0.7 0.9zM129.9 106.3l0.7 0.9 0.7-0.9z" fill="#8a8a8a"/></svg>
<div style="position:absolute;left:77.0px;top:411.2px;width:723.0px;height:9.2px;background:#f0f0f0;border-top:0.6px solid #fdfdfd;"></div>
<div style="position:absolute;left:84.2px;top:413.1px;font-size:5.0px;line-height:6.0px;color:#8e8e8e;white-space:nowrap;">AUDCAD,H1</div>
<div style="position:absolute;left:116.8px;top:411.8px;width:56.8px;height:8.0px;background:#ffffff;border:0.6px solid #333;border-top:none;"></div>
<div style="position:absolute;left:121.2px;top:413.0px;font-size:5.0px;line-height:6.0px;color:#111;white-space:nowrap;">AUDCAD,M2 (offline)</div>
<svg width="800" height="422" viewBox="0 0 800 422"><path d="M788.6 414.4l-1.4 1 1.4 1zM794.6 414.4l1.4 1-1.4 1z" fill="#555"/></svg>
<div style="position:absolute;left:0.0px;top:420.0px;width:800.0px;height:10.0px;background:#f0f0f0;border-top:0.5px solid #dedede;"></div>
<div style="position:absolute;left:1.4px;top:422.8px;font-size:5.0px;line-height:6.0px;color:#111;white-space:nowrap;transform:scaleX(0.95);transform-origin:0 50%;">For Help, press F1</div>
<div style="position:absolute;left:508.4px;top:421.6px;width:0.5px;height:7.4px;background:#d2d2d2;"></div>
<div style="position:absolute;left:558.6px;top:421.6px;width:0.5px;height:7.4px;background:#d2d2d2;"></div>
<div style="position:absolute;left:601.6px;top:421.6px;width:0.5px;height:7.4px;background:#d2d2d2;"></div>
<div style="position:absolute;left:631.8px;top:421.6px;width:0.5px;height:7.4px;background:#d2d2d2;"></div>
<div style="position:absolute;left:661.2px;top:421.6px;width:0.5px;height:7.4px;background:#d2d2d2;"></div>
<div style="position:absolute;left:689.8px;top:421.6px;width:0.5px;height:7.4px;background:#d2d2d2;"></div>
<div style="position:absolute;left:718.8px;top:421.6px;width:0.5px;height:7.4px;background:#d2d2d2;"></div>
<div style="position:absolute;left:744.8px;top:421.6px;width:0.5px;height:7.4px;background:#d2d2d2;"></div>
<div style="position:absolute;left:513.0px;top:422.7px;font-size:4.9px;line-height:5.9px;color:#111;white-space:nowrap;transform:scaleX(0.92);transform-origin:0 50%;">Default</div>
<div style="position:absolute;left:561.6px;top:422.7px;font-size:4.9px;line-height:5.9px;color:#111;white-space:nowrap;transform:scaleX(0.92);transform-origin:0 50%;">2022.06.23 19:00</div>
<div style="position:absolute;left:604.2px;top:422.7px;font-size:4.9px;line-height:5.9px;color:#111;white-space:nowrap;transform:scaleX(0.92);transform-origin:0 50%;">O: 0.89500</div>
<div style="position:absolute;left:634.4px;top:422.7px;font-size:4.9px;line-height:5.9px;color:#111;white-space:nowrap;transform:scaleX(0.92);transform-origin:0 50%;">H: 0.89600</div>
<div style="position:absolute;left:663.8px;top:422.7px;font-size:4.9px;line-height:5.9px;color:#111;white-space:nowrap;transform:scaleX(0.92);transform-origin:0 50%;">L: 0.89418</div>
<div style="position:absolute;left:692.2px;top:422.7px;font-size:4.9px;line-height:5.9px;color:#111;white-space:nowrap;transform:scaleX(0.92);transform-origin:0 50%;">C: 0.89600</div>
<div style="position:absolute;left:721.2px;top:422.7px;font-size:4.9px;line-height:5.9px;color:#111;white-space:nowrap;transform:scaleX(0.92);transform-origin:0 50%;">V: 8910</div>
<div style="position:absolute;left:760.6px;top:422.7px;font-size:4.9px;line-height:5.9px;color:#111;white-space:nowrap;transform:scaleX(0.92);transform-origin:0 50%;">824/2 kb</div>
<svg width="800" height="432" viewBox="0 0 800 432"><rect x="748.2" y="423.2" width="9" height="4.8" fill="#4f86b8"/><path d="M748.2 428v-2.2l9-2.4v4.6z" fill="#55a34f"/><rect x="748.2" y="423.2" width="9" height="4.8" fill="none" stroke="#5a6f86" stroke-width="0.4"/></svg>
<div style="position:absolute;left:0.0px;top:430.0px;width:800.0px;height:20.0px;background:linear-gradient(90deg,#e3edf9,#dbe7f6 50%,#e6eefa);border-top:0.5px solid #cfd9e6;"></div>
<svg width="800" height="450" viewBox="0 0 800 450"><rect x="7.2" y="435.20000000000005" width="9.2" height="8.8" rx="1.5" fill="#1f7be0"/><rect x="8.4" y="436.40000000000003" width="3" height="6.4" rx="0.5" fill="#eef6ff"/><rect x="12.2" y="436.40000000000003" width="3" height="6.4" rx="0.5" fill="#6db6ff"/><rect x="340.6" y="435.20000000000005" width="4.2" height="4.2" fill="#1f8be6"/><rect x="345.20000000000005" y="435.20000000000005" width="4.2" height="4.2" fill="#1f8be6"/><rect x="340.6" y="439.80000000000007" width="4.2" height="4.2" fill="#1f8be6"/><rect x="345.20000000000005" y="439.80000000000007" width="4.2" height="4.2" fill="#1f8be6"/><circle cx="364.2" cy="438.8" r="2.9" fill="none" stroke="#222" stroke-width="1"/><path d="M362.2 441.0l-2.2 2.4" stroke="#222" stroke-width="1.1"/><rect x="379.4" y="435.8" width="5.8" height="5.8" rx="0.8" fill="#f2f2f2" stroke="#c8c8c8" stroke-width="0.4"/><rect x="377.4" y="437.8" width="5.8" height="5.6" rx="0.6" fill="#2b2b2b"/><path d="M395.8 439.20000000000005a4 3.8 0 1 1 2 3.4l-2 0.8z" fill="#6c63d8"/><rect x="398.2" y="438.0" width="3.4" height="2.8" rx="0.6" fill="#fff"/><path d="M401.6 439.0l1.4-0.8v2.6l-1.4-0.8z" fill="#fff"/><circle cx="418.6" cy="439.40000000000003" r="4.3" fill="#1a7ad4"/><path d="M414.6 440.6c0-5 7.4-5.6 8.2-1.4-2-1.6-5-0.6-4.6 2 0.3 1.6 2 2.6 3.6 2-2.6 1.8-7.2 0.6-7.2-2.6z" fill="#49d68a"/><circle cx="418.6" cy="448" r="0.7" fill="#777"/><path d="M432.4 436.20000000000005h3.2l1 1.2h5v2h-9.2z" fill="#e9a91d"/><rect x="432.4" y="438.0" width="9.2" height="5.4" rx="0.5" fill="#ffd257"/><rect x="434.6" y="440.8" width="4.8" height="2.6" fill="#3a8de0"/><rect x="448.2" y="431.6" width="13.6" height="16.8" rx="1.6" fill="#f2f6fc" stroke="#e4ebf5" stroke-width="0.4"/><circle cx="455" cy="439.20000000000005" r="4.4" fill="#17a647"/><path d="M455.4 436.20000000000005a3 3 0 0 1 0 6z" fill="#fff"/><path d="M454 437.40000000000003v3.6" stroke="#fff" stroke-width="0.8"/><rect x="452.6" y="446.6" width="4.8" height="1" rx="0.5" fill="#2b76d8"/><path d="M717.6 440.40000000000003l2.1-2.1 2.1 2.1" fill="none" stroke="#333" stroke-width="0.7"/><path d="M727.6 438.6c2.2-2.2 5-2.2 7.2 0l-3.6 4z" fill="#8a8a8a"/><path d="M729.4 440.20000000000005c1.2-1 2.4-1 3.6 0l-1.8 2z" fill="#333"/><path d="M738.2 438.70000000000005h1.5l1.7-1.6v5.2l-1.7-1.6h-1.5z" fill="none" stroke="#333" stroke-width="0.6"/><path d="M742.6 438.40000000000003c0.9 0.8 0.9 1.9 0 2.6M743.8 437.40000000000003c1.6 1.4 1.6 3.2 0 4.6" fill="none" stroke="#666" stroke-width="0.5"/><rect x="748.6" y="438.0" width="6.2" height="3.6" rx="0.8" fill="none" stroke="#333" stroke-width="0.6"/><rect x="749.2" y="438.6" width="2.6" height="2.4" fill="#333"/><path d="M755.2 439.20000000000005v1.2" stroke="#333" stroke-width="0.7"/><circle cx="748.4" cy="438.0" r="1" fill="#333"/><path d="M789.6 437.20000000000005a2.9 2.9 0 1 0 2.2 4.4a2.4 2.4 0 0 1-2.2-4.4z" fill="none" stroke="#444" stroke-width="0.6"/></svg>
<div style="position:absolute;left:0.0px;top:433.4px;font-size:4.9px;line-height:5.9px;color:#111;white-space:nowrap;left:auto;right:18px;">2:23 PM</div>
<div style="position:absolute;left:0.0px;top:440.1px;font-size:4.9px;line-height:5.9px;color:#111;white-space:nowrap;left:auto;right:18px;">8/3/2022</div>
</div></body></html>
